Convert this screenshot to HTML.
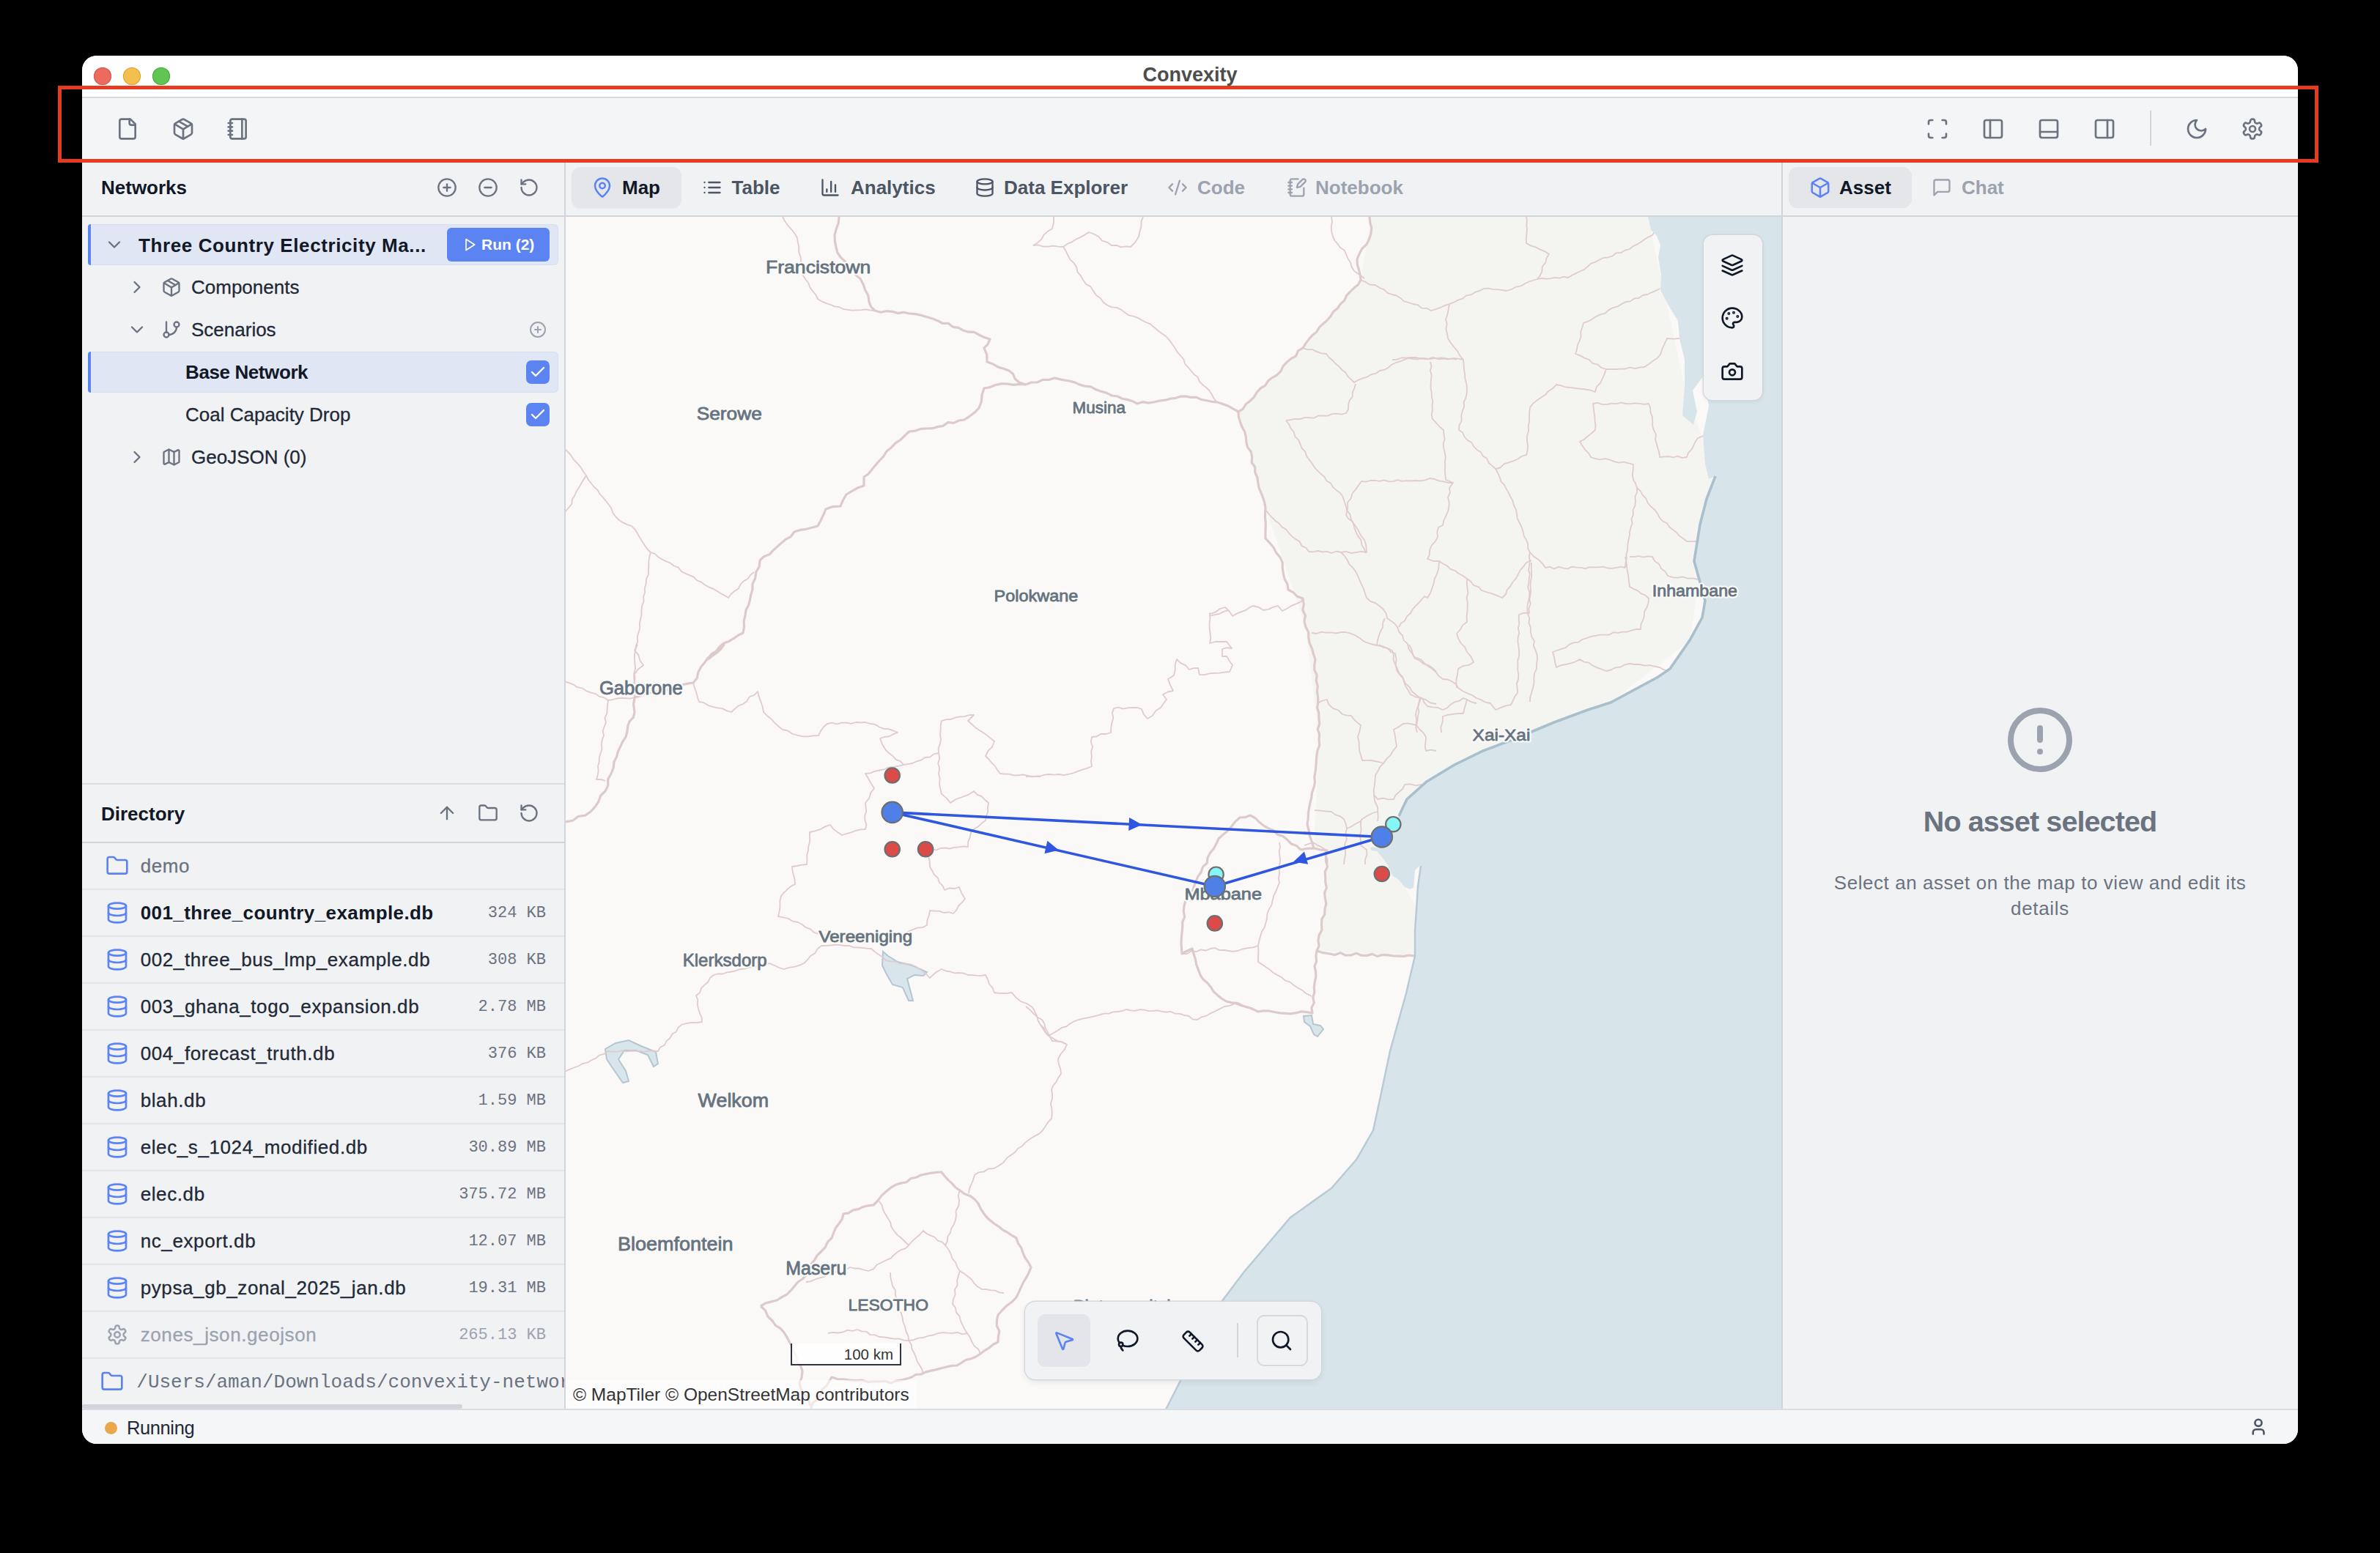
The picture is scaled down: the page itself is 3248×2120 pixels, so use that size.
<!DOCTYPE html>
<html><head><meta charset="utf-8"><title>Convexity</title>
<style>
html,body{margin:0;padding:0;background:#000;width:3248px;height:2120px;overflow:hidden;font-family:"Liberation Sans",sans-serif;}
.a{position:absolute}
#win{position:absolute;left:112px;top:76px;width:3024px;height:1895px;border-radius:20px;overflow:hidden;background:#f1f2f4;}
.ic{position:absolute;fill:none;stroke:currentColor;stroke-linecap:round;stroke-linejoin:round;overflow:visible;}
.t{position:absolute;white-space:nowrap;line-height:1;}
@media (max-width:2400px){html{zoom:0.5;}}
#redbox{position:absolute;left:79px;top:117px;width:3085px;height:105px;box-sizing:border-box;border:5px solid #e63b1f;}
</style></head><body>
<div id="win">
<div class="a" style="left:0.0px;top:0.0px;width:3024.0px;height:56.0px;background:#fff;"></div>
<div class="a" style="left:0.0px;top:56.0px;width:3024.0px;height:2.0px;background:#d5d7dc;"></div>
<div class="a" style="left:16.0px;top:16.0px;width:24.0px;height:24.0px;border-radius:50%;background:#ed6a5e;box-shadow:inset 0 0 0 1px #d5544a;"></div>
<div class="a" style="left:56.0px;top:16.0px;width:24.0px;height:24.0px;border-radius:50%;background:#f5bf4f;box-shadow:inset 0 0 0 1px #d9a23a;"></div>
<div class="a" style="left:96.0px;top:16.0px;width:24.0px;height:24.0px;border-radius:50%;background:#61c554;box-shadow:inset 0 0 0 1px #4aa83e;"></div>
<div class="t" style="left:512.0px;width:2000px;text-align:center;top:13.3px;font-size:27px;color:#4d4d4d;font-weight:bold;font-family:'Liberation Sans',sans-serif;">Convexity</div>
<div class="a" style="left:0.0px;top:58.0px;width:3024.0px;height:88.0px;background:#f4f5f7;"></div>
<div class="a" style="left:0.0px;top:144.0px;width:3024.0px;height:2.0px;background:#d9dce1;"></div>
<svg class="ic" style="left:46.0px;top:84.0px;width:32px;height:32px;color:#6b7280;" viewBox="0 0 24 24" stroke-width="2"><path d="M15 2H6a2 2 0 0 0-2 2v16a2 2 0 0 0 2 2h12a2 2 0 0 0 2-2V7Z"/><path d="M14 2v4a2 2 0 0 0 2 2h4"/></svg>
<svg class="ic" style="left:122.0px;top:84.0px;width:32px;height:32px;color:#6b7280;" viewBox="0 0 24 24" stroke-width="2"><path d="M11 21.73a2 2 0 0 0 2 0l7-4A2 2 0 0 0 21 16V8a2 2 0 0 0-1-1.73l-7-4a2 2 0 0 0-2 0l-7 4A2 2 0 0 0 3 8v8a2 2 0 0 0 1 1.73z"/><path d="M12 22V12"/><path d="m3.3 7 7.703 4.734a2 2 0 0 0 1.994 0L20.7 7"/><path d="m7.5 4.27 9 5.15"/></svg>
<svg class="ic" style="left:196.5px;top:84.0px;width:32px;height:32px;color:#6b7280;" viewBox="0 0 24 24" stroke-width="2"><path d="M2 6h4"/><path d="M2 10h4"/><path d="M2 14h4"/><path d="M2 18h4"/><rect width="16" height="20" x="4" y="2" rx="2"/><path d="M16 2v20"/></svg>
<svg class="ic" style="left:2516.0px;top:84.0px;width:32px;height:32px;color:#6b7280;" viewBox="0 0 24 24" stroke-width="2"><path d="M3 7V5a2 2 0 0 1 2-2h2"/><path d="M17 3h2a2 2 0 0 1 2 2v2"/><path d="M21 17v2a2 2 0 0 1-2 2h-2"/><path d="M7 21H5a2 2 0 0 1-2-2v-2"/></svg>
<svg class="ic" style="left:2592.0px;top:84.0px;width:32px;height:32px;color:#6b7280;" viewBox="0 0 24 24" stroke-width="2"><rect width="18" height="18" x="3" y="3" rx="2"/><path d="M9 3v18"/></svg>
<svg class="ic" style="left:2668.0px;top:84.0px;width:32px;height:32px;color:#6b7280;" viewBox="0 0 24 24" stroke-width="2"><rect width="18" height="18" x="3" y="3" rx="2"/><path d="M3 15h18"/></svg>
<svg class="ic" style="left:2744.0px;top:84.0px;width:32px;height:32px;color:#6b7280;" viewBox="0 0 24 24" stroke-width="2"><rect width="18" height="18" x="3" y="3" rx="2"/><path d="M15 3v18"/></svg>
<div class="a" style="left:2822.0px;top:75.0px;width:2.0px;height:48.0px;background:#d1d5db;"></div>
<svg class="ic" style="left:2869.5px;top:84.0px;width:32px;height:32px;color:#6b7280;" viewBox="0 0 24 24" stroke-width="2"><path d="M12 3a6 6 0 0 0 9 9 9 9 0 1 1-9-9Z"/></svg>
<svg class="ic" style="left:2946.0px;top:84.0px;width:32px;height:32px;color:#6b7280;" viewBox="0 0 24 24" stroke-width="2"><path d="M12.22 2h-.44a2 2 0 0 0-2 2v.18a2 2 0 0 1-1 1.73l-.43.25a2 2 0 0 1-2 0l-.15-.08a2 2 0 0 0-2.73.73l-.22.38a2 2 0 0 0 .73 2.73l.15.1a2 2 0 0 1 1 1.72v.51a2 2 0 0 1-1 1.74l-.15.09a2 2 0 0 0-.73 2.73l.22.38a2 2 0 0 0 2.73.73l.15-.08a2 2 0 0 1 2 0l.43.25a2 2 0 0 1 1 1.73V20a2 2 0 0 0 2 2h.44a2 2 0 0 0 2-2v-.18a2 2 0 0 1 1-1.73l.43-.25a2 2 0 0 1 2 0l.15.08a2 2 0 0 0 2.73-.73l.22-.39a2 2 0 0 0-.73-2.73l-.15-.08a2 2 0 0 1-1-1.74v-.5a2 2 0 0 1 1-1.74l.15-.09a2 2 0 0 0 .73-2.73l-.22-.38a2 2 0 0 0-2.73-.73l-.15.08a2 2 0 0 1-2 0l-.43-.25a2 2 0 0 1-1-1.73V4a2 2 0 0 0-2-2z"/><circle cx="12" cy="12" r="3"/></svg>
<div class="a" style="left:0.0px;top:146.0px;width:658.0px;height:1702.0px;background:#f1f2f4;"></div>
<div class="a" style="left:660.0px;top:146.0px;width:1659.0px;height:72.0px;background:#f1f2f4;"></div>
<div class="a" style="left:2321.0px;top:146.0px;width:703.0px;height:1702.0px;background:#f1f2f4;"></div>
<svg class="a" style="left:660px;top:220px;" width="1659" height="1628" viewBox="772 296 1659 1628">
<rect x="772" y="296" width="1659" height="1628" fill="#faf9f8"/>
<polygon points="1690,562 1778,475 1857,382 1871,296 2249,296 2299,528 2341,650 2306,874 2198,959 2024,1025 1920,1091 1883,1152 1940,1250 1935,1305 1797,1298 1808,1241 1811,1161 1793,1158 1800,1010 1782,856 1727,693" fill="#f3f4ef" opacity="0.8"/>
<polygon points="1205.0,1299.0 1212.0,1305.0 1225.0,1313.0 1245.0,1318.0 1265.0,1327.0 1260.0,1332.0 1248.0,1331.0 1238.0,1336.0 1246.0,1366.0 1240.0,1366.0 1232.0,1348.0 1218.0,1344.0 1210.0,1330.0 1204.0,1318.0" fill="#d8e5ea" stroke="#b3c7d1" stroke-width="2"/>
<polygon points="826.0,1432.0 840.0,1424.0 858.0,1420.0 875.0,1428.0 895.0,1436.0 898.0,1452.0 892.0,1456.0 884.0,1440.0 868.0,1434.0 852.0,1434.0 844.0,1446.0 854.0,1462.0 858.0,1476.0 850.0,1478.0 836.0,1458.0 828.0,1446.0" fill="#d8e5ea" stroke="#b3c7d1" stroke-width="2"/>
<polygon points="1779.0,1387.0 1790.0,1386.0 1792.0,1398.0 1802.0,1400.0 1806.0,1405.0 1798.0,1415.0 1793.0,1412.0 1788.0,1401.0 1780.0,1395.0" fill="#d8e5ea" stroke="#b3c7d1" stroke-width="2"/>
<polyline points="1068.0,296.0 1071.2,302.3 1075.4,308.0 1080.2,313.3 1084.6,318.8 1088.0,325.0 1089.0,331.4 1090.3,337.7 1090.2,344.2 1092.5,350.4 1093.1,356.9 1093.8,363.3 1093.9,369.8 1096.0,376.0 1099.3,381.3 1103.2,386.3 1105.4,392.4 1109.1,397.5 1113.3,402.3 1116.0,408.0 1121.4,411.4 1127.2,413.9 1133.2,415.8 1138.9,418.4 1145.4,419.2 1151.0,422.0 1157.1,422.9 1163.2,423.7 1169.4,423.4 1175.6,423.1 1181.8,422.3 1187.9,423.5 1194.0,424.0" fill="none" stroke="#e0cbcd" stroke-width="1.8" stroke-linejoin="round"/>
<polyline points="1410.0,335.0 1416.9,334.3 1423.6,336.6 1430.5,336.7 1437.4,335.6 1444.2,336.7 1451.0,337.0 1454.5,342.6 1457.4,348.5 1460.4,354.3 1465.5,358.9 1469.0,364.4 1470.4,371.2 1474.8,376.3 1478.0,382.0 1482.1,387.7 1488.4,391.4 1492.1,397.4 1496.2,403.1 1501.9,407.3 1506.0,413.0 1511.3,416.8 1517.1,419.4 1524.0,419.9 1529.8,422.6 1535.0,426.6 1540.3,430.3 1546.7,431.6 1552.7,433.9 1558.3,437.1 1564.0,440.0 1570.2,442.7 1575.2,447.0 1580.3,451.3 1585.6,455.2 1591.0,459.0 1595.5,463.9 1599.4,469.3 1603.3,474.7 1606.6,480.4 1610.9,485.5 1615.3,490.5 1617.4,497.2 1622.0,502.0 1625.9,506.6 1629.7,511.3 1634.7,514.9 1637.0,520.9 1641.2,525.2 1646.0,529.0 1650.6,533.4 1653.9,538.7 1656.8,544.4 1661.0,549.0" fill="none" stroke="#e0cbcd" stroke-width="1.8" stroke-linejoin="round"/>
<polyline points="1410.0,335.0 1416.0,331.4 1421.2,326.7 1424.8,320.3 1430.0,315.7 1436.0,312.0 1437.9,304.1 1438.0,296.0" fill="none" stroke="#e0cbcd" stroke-width="1.8" stroke-linejoin="round"/>
<polyline points="1451.0,337.0 1456.5,333.0 1462.7,330.4 1468.3,326.7 1474.5,323.9 1480.3,320.6 1486.0,317.0 1492.8,319.5 1499.1,323.0 1504.1,328.6 1511.1,330.8 1517.0,335.0 1523.6,334.8 1529.9,337.4 1536.5,336.4 1543.0,337.0 1549.2,330.6 1554.0,323.0 1555.4,316.2 1557.4,309.6 1557.5,302.5 1560.0,296.0" fill="none" stroke="#e0cbcd" stroke-width="1.8" stroke-linejoin="round"/>
<polyline points="770.0,612.0 774.9,616.8 779.4,621.9 783.1,627.7 787.9,632.5 792.4,637.7 795.9,643.5 800.0,649.0 802.8,654.8 806.8,659.7 810.7,664.7 815.6,668.9 818.7,674.5 823.0,679.1 827.0,684.0 830.9,689.0 834.4,694.3 836.5,700.5 840.5,705.5 845.0,710.0 850.3,713.4 856.0,716.1 862.0,718.0 866.4,722.6 869.9,728.0 872.9,733.6 876.3,739.0 879.8,744.3 883.4,749.5 888.0,754.0 893.9,756.1 898.5,760.5 903.7,763.7 909.2,766.4 915.0,768.7 919.8,772.5 925.7,774.7 929.8,779.9 935.2,782.8 940.9,785.1 946.6,787.6 951.0,792.2 956.8,794.5 961.7,798.3 967.0,801.3 972.8,803.6 978.2,806.5 983.3,810.0 988.8,812.7 994.0,816.0 997.7,811.0 1002.4,806.9 1007.7,803.5 1010.6,797.6 1015.0,793.2 1020.5,790.0 1024.2,784.9 1029.0,781.0" fill="none" stroke="#e0cbcd" stroke-width="1.8" stroke-linejoin="round"/>
<polyline points="800.0,649.0 796.7,654.3 793.4,659.7 790.3,665.1 786.9,670.4 784.4,676.2 781.0,681.4 780.2,688.1 776.1,693.0 771.9,697.9 770.0,704.0" fill="none" stroke="#e0cbcd" stroke-width="1.8" stroke-linejoin="round"/>
<polyline points="888.0,754.0 886.3,760.0 885.3,766.0 885.3,772.3 885.0,778.4 884.8,784.6 882.0,790.4 881.7,796.6 879.9,802.6 880.1,808.8 878.1,814.7 878.5,821.0 876.2,826.9 875.4,833.0 875.4,839.2 874.1,845.2 872.8,851.3 873.3,857.5 871.4,863.5 869.7,869.5 870.3,875.8 867.9,881.6 867.3,887.8 866.0,893.8 866.0,900.0 866.5,906.5 867.1,913.0 865.2,919.5 865.1,926.0 866.2,932.5 867.1,939.0 866.8,945.5 866.0,952.0" fill="none" stroke="#e0cbcd" stroke-width="1.8" stroke-linejoin="round"/>
<polyline points="770.0,930.0 776.2,932.1 782.4,934.3 787.8,938.2 794.5,939.3 800.0,943.1 806.1,945.3 812.5,947.1 818.0,950.8 824.5,952.2 830.0,956.0 836.0,955.1 841.9,953.5 847.9,952.9 854.0,953.1 860.1,953.6 866.0,952.0" fill="none" stroke="#e0cbcd" stroke-width="1.8" stroke-linejoin="round"/>
<polyline points="866.0,952.0 865.2,945.6 867.3,939.2 865.0,932.8 866.6,926.4 866.0,920.0 871.2,913.2 878.0,908.0 873.4,901.7 871.2,893.9 866.0,888.0 870.0,880.0" fill="none" stroke="#e0cbcd" stroke-width="1.8" stroke-linejoin="round"/>
<polyline points="830.0,956.0 829.2,962.0 828.6,968.1 828.3,974.1 825.4,979.8 826.9,986.2 824.7,992.0 822.7,997.8 824.0,1004.2 821.8,1010.0 820.8,1016.0 821.5,1022.2 819.7,1028.0 817.9,1033.9 817.7,1040.0 816.0,1045.9 816.7,1052.1 815.6,1058.1 814.0,1064.0 820.2,1063.9 826.0,1066.0" fill="none" stroke="#e0cbcd" stroke-width="1.8" stroke-linejoin="round"/>
<polyline points="946.0,932.0 947.8,938.6 950.2,944.9 951.8,951.6 954.0,958.0 960.5,959.2 966.3,962.8 972.6,964.9 979.0,966.4 985.7,967.1 991.7,970.1 998.0,972.0 1002.8,967.6 1007.9,963.4 1014.2,961.0 1019.4,957.1 1022.9,951.0 1029.5,948.8 1034.0,944.0 1035.7,951.1 1038.3,957.9 1040.6,964.8 1042.0,972.0 1046.9,977.2 1052.5,981.5 1057.2,986.8 1062.5,991.5 1068.0,996.0 1075.4,997.7 1081.7,1002.0 1089.0,1004.0 1096.0,1005.4 1103.0,1005.3 1110.0,1004.3 1117.0,1004.0 1120.0,997.9 1123.9,992.5 1129.0,988.0 1135.5,986.7 1142.0,988.7 1148.5,986.7 1155.0,986.6 1161.5,987.9 1168.0,986.0 1174.5,986.4 1181.0,986.0 1187.3,987.8 1193.9,988.8 1199.8,992.2 1205.9,994.9 1212.7,995.1 1218.9,997.3 1225.0,1000.0 1219.1,1002.2 1213.4,1005.2 1207.0,1006.0 1201.0,1008.0 1204.2,1016.4 1209.0,1024.0 1213.5,1028.3 1218.5,1032.1 1222.8,1036.8 1228.8,1039.2 1233.0,1044.0 1239.0,1043.2 1245.0,1042.0 1250.9,1039.3 1257.1,1037.6 1262.6,1034.0 1269.3,1033.4 1274.6,1029.3 1281.0,1028.0 1280.6,1021.6 1283.0,1015.5 1284.0,1009.3 1283.1,1002.8 1283.6,996.5 1283.7,990.2 1285.0,984.0 1291.2,982.2 1297.6,982.0 1303.7,979.7 1310.0,978.4 1316.4,978.2 1322.5,976.2 1329.0,976.0 1321.0,984.0 1325.9,988.3 1330.7,992.7 1336.0,996.6 1341.6,1000.0 1347.0,1003.7 1352.0,1007.9 1357.0,1012.0 1354.2,1019.4 1348.5,1025.0 1345.0,1032.0 1349.4,1036.5 1353.4,1041.3 1357.9,1045.6 1361.1,1051.1 1365.0,1056.0 1371.1,1056.7 1377.2,1056.6 1383.3,1058.4 1389.4,1058.3 1395.6,1057.5 1401.7,1058.7 1407.7,1060.3 1413.9,1059.6 1420.0,1060.0" fill="none" stroke="#e0cbcd" stroke-width="1.8" stroke-linejoin="round"/>
<polyline points="1233.0,1044.0 1226.5,1045.6 1220.0,1046.8 1213.2,1047.3 1207.0,1050.1 1200.5,1051.5 1193.9,1052.8 1187.7,1055.4 1181.0,1056.0 1185.0,1062.7 1188.7,1069.5 1193.0,1076.0 1188.3,1082.2 1186.0,1089.9 1181.0,1096.0 1181.6,1102.0 1182.1,1108.0 1180.1,1114.0 1180.5,1120.0 1182.3,1126.0 1181.0,1132.0 1174.3,1132.3 1167.9,1133.9 1161.7,1136.4 1155.3,1138.1 1149.0,1140.0 1143.0,1136.1 1137.4,1131.7 1133.0,1126.0 1126.0,1128.4 1119.4,1132.2 1112.3,1134.3 1105.0,1136.0 1105.1,1142.4 1105.2,1148.7 1103.4,1154.9 1102.9,1161.2 1101.2,1167.3 1101.5,1173.7 1101.0,1180.0 1094.3,1180.6 1087.7,1182.0 1081.0,1183.0 1081.6,1189.1 1083.1,1195.0 1084.6,1200.9 1085.0,1207.0 1079.4,1209.9 1074.6,1213.9 1070.1,1218.3 1066.0,1223.0 1064.4,1229.9 1064.5,1237.1 1063.7,1244.1 1062.0,1251.0 1068.9,1252.4 1075.8,1253.8 1082.0,1257.7 1089.0,1259.0 1094.7,1262.0 1099.7,1266.2 1106.0,1268.3 1110.8,1272.9 1117.0,1275.0 1123.4,1276.5 1130.1,1274.6 1136.6,1275.7 1142.9,1278.1 1149.5,1277.4 1155.9,1279.3 1162.5,1278.2 1169.0,1279.0 1175.3,1277.4 1181.8,1278.6 1188.2,1278.6 1194.6,1276.8 1200.9,1275.8 1207.4,1276.1 1213.9,1277.5 1220.2,1276.5 1226.5,1274.3 1233.0,1275.0 1239.2,1271.9 1245.4,1269.2 1251.8,1266.6 1258.9,1266.2 1265.0,1263.0 1265.4,1256.2 1267.8,1249.7 1269.0,1243.0 1275.4,1243.7 1281.9,1243.7 1288.1,1246.0 1294.7,1245.2 1301.0,1247.0 1305.3,1242.3 1308.2,1236.3 1312.8,1231.9 1317.0,1227.0 1312.3,1219.4 1309.0,1211.0 1302.5,1213.0 1295.4,1212.4 1289.0,1215.0 1286.4,1209.2 1281.9,1204.6 1279.9,1198.4 1275.0,1194.1 1272.1,1188.5 1269.0,1183.0 1268.6,1175.2 1266.7,1167.6 1265.0,1160.0 1271.1,1158.4 1277.5,1160.5 1283.6,1157.9 1289.8,1157.5 1296.2,1158.5 1302.3,1156.9 1308.5,1156.3 1314.7,1155.3 1321.0,1156.0 1321.2,1149.1 1323.9,1142.7 1325.0,1136.0 1329.6,1131.4 1335.2,1128.2 1339.8,1123.7 1345.0,1120.0 1345.9,1114.0 1348.3,1108.2 1348.0,1102.0 1349.0,1096.0 1344.1,1091.8 1339.6,1087.2 1333.4,1084.7 1329.0,1080.0 1321.4,1084.9 1313.0,1088.0 1304.5,1091.0 1297.0,1096.0 1291.6,1089.4 1285.0,1084.0 1283.3,1077.1 1282.1,1070.1 1282.7,1062.9 1281.0,1056.0 1282.2,1049.0 1280.2,1042.0 1282.3,1035.0 1281.0,1028.0" fill="none" stroke="#e0cbcd" stroke-width="1.8" stroke-linejoin="round"/>
<polyline points="1400.0,1060.0 1406.4,1059.6 1412.9,1059.8 1419.4,1059.5 1425.7,1057.7 1432.2,1057.0 1438.6,1057.6 1445.1,1057.0 1451.6,1058.2 1458.0,1057.0 1464.6,1055.3 1470.9,1052.9 1477.3,1050.6 1483.7,1048.6 1490.0,1046.0 1489.0,1039.3 1489.8,1032.7 1489.1,1026.0 1491.1,1019.3 1488.8,1012.7 1490.0,1006.0 1496.7,1005.4 1502.7,1001.8 1509.6,1002.0 1516.0,1000.0 1516.3,993.3 1517.3,986.8 1519.4,980.3 1517.9,973.4 1520.0,967.0 1526.2,965.5 1532.5,967.7 1538.8,966.3 1545.0,966.0 1551.7,965.9 1558.0,968.0 1560.8,975.2 1566.0,981.0 1572.8,977.0 1577.3,970.2 1584.0,966.0 1587.8,960.4 1592.0,955.0 1587.0,948.0 1593.7,944.5 1601.0,943.0 1597.0,935.2 1594.0,927.0 1602.0,922.0 1603.7,914.7 1603.7,907.2 1606.0,900.0 1611.3,905.1 1618.1,908.4 1623.0,914.0 1628.8,912.1 1635.0,912.0 1637.0,921.0 1643.9,921.2 1650.6,919.4 1657.5,918.8 1664.4,918.6 1671.2,917.6 1678.0,917.0 1682.0,908.0 1677.7,902.2 1674.0,896.0 1668.0,896.0 1668.0,886.0 1674.4,884.2 1681.0,885.0 1674.0,876.0 1666.3,876.0 1658.6,876.0 1651.0,878.0 1652.3,871.2 1651.5,864.3 1650.6,857.5 1650.6,850.7 1651.5,843.8 1651.0,837.0 1652.0,838.0 1658.9,835.4 1664.9,831.0 1672.0,829.0 1677.6,834.5 1682.0,841.0 1687.4,837.9 1693.2,835.4 1699.2,833.4 1704.4,829.8 1710.0,827.0 1717.5,828.8 1724.0,833.0 1730.9,831.9 1737.3,828.8 1744.0,827.0 1750.0,834.0 1756.5,830.8 1762.7,826.8 1769.4,824.1 1776.0,821.0 1778.0,817.0" fill="none" stroke="#e0cbcd" stroke-width="1.8" stroke-linejoin="round"/>
<polyline points="1420.0,1399.0 1416.6,1393.3 1415.0,1386.8 1412.2,1380.8 1409.0,1375.0 1401.4,1370.1 1393.0,1367.0 1386.4,1361.6 1381.0,1355.0 1375.0,1355.8 1369.0,1356.0 1363.0,1355.8 1357.0,1355.0 1354.6,1348.7 1350.1,1343.5 1348.1,1337.0 1345.0,1331.0 1339.0,1331.8 1333.0,1331.6 1327.0,1331.2 1321.0,1331.0 1315.2,1328.7 1309.1,1328.0 1302.7,1328.3 1296.9,1326.3 1290.8,1325.3 1285.0,1323.0 1279.0,1326.2 1273.8,1330.3 1269.0,1335.0 1264.5,1330.3 1259.6,1326.3 1254.4,1322.5 1249.0,1319.0 1242.6,1316.4 1235.8,1315.5 1228.9,1315.7 1222.5,1312.7 1215.7,1312.4 1209.0,1311.0 1204.4,1306.4 1199.1,1302.9 1193.9,1299.2 1189.0,1295.0 1183.0,1294.7 1177.0,1293.9 1170.9,1293.5 1164.9,1293.4 1159.1,1290.8 1153.0,1291.0 1146.6,1290.2 1140.2,1289.6 1133.8,1290.5 1127.4,1290.8 1121.0,1291.0 1115.7,1295.3 1112.1,1301.3 1106.2,1305.0 1101.9,1310.3 1097.0,1315.0 1090.5,1317.9 1083.7,1319.8 1076.7,1320.9 1070.0,1323.0 1063.1,1321.0 1056.6,1317.8 1050.0,1315.0 1043.3,1316.0 1036.7,1318.0 1030.2,1320.0 1023.3,1320.4 1016.8,1322.4 1010.0,1323.0 1004.2,1325.1 998.2,1326.5 992.1,1327.4 986.3,1329.5 979.9,1329.3 974.0,1331.0 969.0,1334.8 966.2,1340.5 961.5,1344.6 957.1,1348.9 955.0,1355.2 950.0,1359.0 952.3,1364.8 951.8,1371.2 953.1,1377.2 955.0,1383.1 957.6,1388.8 958.0,1395.0 951.0,1396.2 943.9,1396.0 936.8,1396.9 930.0,1399.0 925.4,1402.9 922.6,1408.6 917.3,1411.8 914.3,1417.2 909.5,1421.1 906.8,1426.7 901.0,1429.6 898.0,1435.0 891.8,1434.7 885.6,1434.4 879.5,1435.8 873.3,1434.7 867.1,1434.8 860.9,1434.7 854.7,1435.4 848.5,1434.4 842.4,1435.4 836.2,1435.6 830.0,1435.0 824.7,1438.7 818.3,1440.3 813.3,1444.5 807.5,1447.1 802.0,1450.4 795.5,1451.8 790.0,1455.0 783.3,1457.5 776.6,1460.2 770.0,1463.0" fill="none" stroke="#e0cbcd" stroke-width="1.8" stroke-linejoin="round"/>
<polyline points="1420.0,1399.0 1424.6,1403.3 1426.9,1409.3 1431.0,1414.0 1437.1,1417.4 1443.0,1421.1 1450.0,1422.4 1456.0,1426.0 1452.6,1433.0 1447.4,1439.0 1444.0,1446.0 1444.9,1452.8 1447.2,1459.2 1448.0,1466.0 1444.3,1471.0 1441.7,1476.7 1437.6,1481.3 1435.0,1487.0 1436.1,1493.7 1435.8,1500.3 1433.9,1507.0 1435.4,1513.7 1435.7,1520.3 1435.0,1527.0 1430.3,1531.8 1426.7,1537.4 1423.0,1543.0 1417.6,1548.1 1410.9,1551.4 1404.7,1555.4 1399.0,1560.0 1394.8,1564.7 1389.1,1567.7 1385.3,1572.8 1380.1,1576.4 1375.0,1580.0 1369.3,1586.9 1362.0,1592.0 1355.9,1595.2 1348.7,1595.5 1342.9,1599.5 1335.9,1600.3 1330.0,1604.0 1328.2,1610.3 1325.7,1616.4 1323.0,1622.4 1322.0,1629.0" fill="none" stroke="#e0cbcd" stroke-width="1.8" stroke-linejoin="round"/>
<polyline points="1613.0,1302.0 1619.7,1302.1 1625.8,1298.3 1632.6,1299.2 1638.8,1296.4 1645.7,1297.5 1652.0,1295.0 1658.3,1294.2 1664.2,1297.1 1670.5,1297.0 1676.6,1298.0 1682.7,1298.9 1689.0,1298.0 1695.8,1295.5 1702.9,1294.1 1710.1,1293.3 1717.0,1291.0 1718.3,1284.6 1720.1,1278.3 1721.9,1272.0 1725.5,1266.3 1727.4,1260.1 1729.0,1253.7 1729.4,1247.0 1732.0,1241.0 1735.4,1235.4 1736.7,1229.0 1738.3,1222.7 1741.2,1217.0 1743.5,1210.9 1746.0,1205.0 1744.8,1198.9 1746.2,1192.8 1745.6,1186.7 1746.2,1180.6 1747.2,1174.4 1746.4,1168.3 1745.7,1162.2 1747.0,1156.1 1746.0,1150.0" fill="none" stroke="#e0cbcd" stroke-width="1.8" stroke-linejoin="round"/>
<polyline points="1717.0,1291.0 1717.4,1298.3 1717.1,1305.7 1717.0,1313.0 1722.3,1316.4 1727.5,1320.1 1732.7,1323.6 1737.5,1327.8 1743.0,1331.0 1748.9,1334.0 1753.9,1338.5 1760.5,1340.6 1765.6,1344.8 1771.1,1348.5 1777.0,1351.6 1782.0,1356.0 1790.0,1360.0" fill="none" stroke="#e0cbcd" stroke-width="1.8" stroke-linejoin="round"/>
<polyline points="1400.0,1374.0 1405.5,1378.5 1410.5,1383.7 1415.7,1388.5 1422.0,1392.0 1425.3,1397.5 1426.9,1403.9 1429.9,1409.6 1432.8,1415.4 1436.0,1421.0 1442.2,1421.3 1448.3,1422.4 1454.0,1425.0" fill="none" stroke="#e0cbcd" stroke-width="1.8" stroke-linejoin="round"/>
<polyline points="1443.0,1407.0 1448.4,1403.2 1454.8,1401.4 1460.2,1397.6 1465.8,1394.2 1472.0,1392.0 1477.9,1390.7 1483.8,1389.4 1489.7,1388.1 1495.6,1386.8 1501.4,1385.0 1507.3,1383.7 1513.5,1383.6 1519.2,1381.3 1525.3,1381.0 1531.3,1380.1 1537.0,1378.0 1543.0,1379.3 1549.1,1379.8 1555.3,1378.2 1561.4,1378.5 1567.5,1380.2 1573.6,1380.0 1579.7,1379.3 1585.8,1380.9 1591.8,1381.7 1598.0,1381.0 1603.7,1383.7 1610.2,1383.9 1616.2,1386.0 1622.4,1387.0 1627.6,1391.4 1634.0,1392.0 1639.8,1388.3 1646.6,1386.6 1652.5,1383.1 1658.8,1380.2 1664.9,1377.1 1671.0,1374.0 1678.3,1372.9 1685.0,1370.0 1691.3,1372.5 1698.0,1373.9 1704.6,1375.6 1710.6,1378.7 1717.0,1381.0" fill="none" stroke="#e0cbcd" stroke-width="1.8" stroke-linejoin="round"/>
<polyline points="1420.0,1399.0 1423.3,1404.3 1426.7,1409.5 1431.0,1414.0 1437.0,1410.5 1443.0,1407.0" fill="none" stroke="#e0cbcd" stroke-width="1.8" stroke-linejoin="round"/>
<polyline points="1100.0,1750.0 1106.4,1749.1 1112.2,1746.5 1118.2,1744.7 1124.4,1743.1 1130.0,1740.0 1135.8,1737.4 1142.1,1736.4 1148.4,1735.1 1154.3,1733.0 1160.0,1730.0 1166.2,1731.5 1172.7,1731.6 1178.8,1733.5 1185.0,1735.0 1192.0,1732.4 1196.9,1726.5 1203.5,1723.3 1210.0,1720.0 1215.7,1717.7 1219.9,1713.2 1224.5,1709.3 1229.7,1706.2 1235.6,1704.3 1240.0,1700.0 1244.7,1694.7 1249.9,1689.9 1255.3,1685.3 1260.0,1680.0 1264.5,1684.0 1270.0,1686.6 1275.7,1689.0 1279.9,1693.5 1285.7,1695.6 1290.0,1700.0 1294.3,1705.3 1297.4,1711.2 1299.5,1717.8 1303.9,1723.0 1306.2,1729.4 1310.0,1735.0 1315.6,1738.4 1320.7,1742.5 1325.9,1746.5 1329.6,1752.1 1334.4,1756.6 1340.0,1760.0 1346.1,1760.2 1352.1,1761.3 1358.2,1761.7 1363.9,1764.4 1370.0,1765.0" fill="none" stroke="#e0cbcd" stroke-width="1.8" stroke-linejoin="round"/>
<polyline points="1200.0,1640.0 1203.7,1645.3 1205.2,1651.7 1208.2,1657.3 1211.5,1662.8 1215.0,1668.2 1216.4,1674.7 1220.0,1680.0 1224.4,1685.6 1230.0,1690.0 1235.0,1695.0 1240.0,1700.0" fill="none" stroke="#e0cbcd" stroke-width="1.8" stroke-linejoin="round"/>
<polyline points="1310.0,1625.0 1307.7,1631.8 1309.0,1639.1 1308.3,1646.2 1304.6,1652.8 1305.0,1660.0 1303.7,1666.0 1301.7,1671.8 1298.2,1677.0 1296.8,1683.0 1293.3,1688.2 1292.8,1694.5 1290.0,1700.0" fill="none" stroke="#e0cbcd" stroke-width="1.8" stroke-linejoin="round"/>
<polyline points="1215.0,1737.0 1215.3,1743.4 1216.6,1749.6 1218.2,1755.7 1221.9,1761.3 1221.9,1767.8 1223.8,1773.8 1225.0,1780.0 1226.8,1786.3 1229.7,1792.2 1231.5,1798.5 1232.6,1805.0 1235.1,1811.0 1236.4,1817.5 1239.4,1823.4 1240.0,1830.0 1243.6,1835.3 1244.5,1841.7 1247.7,1847.2 1250.0,1853.0 1251.9,1859.0 1255.4,1864.3 1258.6,1869.8 1260.0,1876.0" fill="none" stroke="#e0cbcd" stroke-width="1.8" stroke-linejoin="round"/>
<polyline points="1310.0,1735.0 1308.0,1741.3 1306.2,1747.7 1306.6,1754.5 1302.9,1760.4 1303.7,1767.3 1301.0,1773.5 1300.0,1780.0 1303.9,1785.2 1305.1,1791.8 1309.4,1796.7 1310.9,1803.1 1313.7,1808.9 1316.5,1814.6 1320.0,1820.0 1323.7,1825.5 1326.3,1831.8 1329.7,1837.5 1335.3,1841.8 1338.0,1848.0" fill="none" stroke="#e0cbcd" stroke-width="1.8" stroke-linejoin="round"/>
<polyline points="1130.0,1820.0 1136.6,1818.8 1143.5,1819.5 1150.1,1818.5 1156.6,1815.9 1163.5,1816.9 1170.0,1815.0 1175.9,1817.4 1182.4,1817.8 1187.6,1822.2 1194.2,1822.4 1200.0,1825.0 1206.7,1825.3 1213.4,1826.5 1220.0,1827.7 1226.8,1827.3 1233.3,1829.7 1240.0,1830.0 1246.9,1829.2 1253.3,1826.7 1260.2,1825.8 1266.8,1823.7 1273.6,1822.5 1280.0,1820.0 1286.7,1819.1 1293.3,1819.6 1300.0,1819.9 1306.7,1818.9 1313.3,1821.3 1320.0,1820.0" fill="none" stroke="#e0cbcd" stroke-width="1.8" stroke-linejoin="round"/>
<polyline points="1858.0,657.0 1864.2,657.6 1870.3,656.0 1876.5,655.9 1882.7,656.9 1888.8,655.3 1895.0,657.3 1901.2,657.2 1907.3,655.1 1913.5,656.8 1919.7,656.2 1925.8,656.5 1932.0,656.0 1938.5,656.3 1944.9,655.3 1951.0,653.0 1957.4,653.9 1963.6,656.3 1970.1,657.4 1976.4,659.1 1983.0,659.0 1978.0,666.0 1978.9,672.5 1976.0,678.7 1977.6,685.2 1977.4,691.7 1976.0,698.0 1973.4,704.2 1970.4,710.3 1969.0,717.0 1963.0,720.0 1961.2,726.4 1962.0,733.0 1958.7,739.2 1953.9,744.5 1951.0,751.0 1950.8,757.3 1948.0,763.0 1955.8,765.8 1964.0,766.0 1963.0,777.0 1961.0,783.7 1957.9,790.0 1956.5,796.9 1954.2,803.5 1951.8,810.0 1948.0,816.0 1944.0,814.0 1939.9,818.5 1936.1,823.2 1931.7,827.4 1927.7,832.0 1924.7,837.5 1919.9,841.4 1917.4,847.2 1912.1,850.7 1909.0,856.0" fill="none" stroke="#e0cbcd" stroke-width="1.8" stroke-linejoin="round"/>
<polyline points="1858.0,657.0 1853.9,662.6 1849.9,668.3 1845.5,673.7 1843.5,680.7 1839.0,686.0 1839.2,694.6 1837.0,703.0 1840.3,708.3 1845.4,712.0 1849.0,717.0 1853.6,723.5 1856.9,730.8 1862.0,737.0 1864.4,745.3 1865.0,754.0 1858.0,752.9 1851.0,754.0 1844.0,755.2 1837.0,752.8 1830.0,754.0" fill="none" stroke="#e0cbcd" stroke-width="1.8" stroke-linejoin="round"/>
<polyline points="1830.0,754.0 1834.7,758.7 1838.5,764.1 1841.3,770.2 1846.1,774.8 1850.0,780.1 1853.0,786.0 1855.5,792.0 1858.0,797.9 1860.9,803.7 1862.9,809.9 1865.0,816.0 1870.2,820.8 1877.1,823.2 1882.7,827.3 1888.0,832.0 1891.7,837.5 1893.0,844.0 1898.1,847.4 1903.1,851.1 1907.0,856.0 1909.1,862.5 1914.0,867.5 1915.7,874.2 1921.0,878.9 1922.4,885.8 1926.7,891.2 1930.0,897.0 1939.0,900.0 1943.6,904.9 1948.7,909.3 1954.4,913.0 1959.5,917.4 1963.7,922.9 1969.0,927.0 1975.3,927.5 1981.0,930.0 1986.5,933.5 1990.0,939.0 1995.9,943.2 2002.3,946.3 2009.1,948.9 2015.0,953.0 2021.3,955.4 2027.3,958.7 2034.0,960.0 2041.0,969.0 2047.8,966.1 2054.7,963.3 2062.0,962.0 2064.8,956.6 2067.2,950.9 2071.0,946.0 2070.7,939.7 2069.9,933.4 2072.1,927.1 2072.3,920.8 2071.2,914.5 2071.4,908.2 2071.1,901.9 2073.2,895.7 2073.1,889.4 2072.6,883.1 2071.4,876.7 2071.5,870.5 2073.3,864.2 2071.8,857.9 2073.3,851.6 2072.7,845.3 2073.0,839.0 2079.8,836.7 2087.0,837.0 2086.4,830.7 2088.7,824.5 2087.3,818.2 2088.6,811.9 2089.1,805.7 2088.4,799.4 2088.9,793.1 2090.2,786.9 2090.1,780.6 2089.8,774.3 2090.0,768.0" fill="none" stroke="#e0cbcd" stroke-width="1.8" stroke-linejoin="round"/>
<polyline points="1964.0,766.0 1969.4,769.5 1975.1,772.5 1979.8,777.1 1986.0,779.2 1991.1,783.2 1996.8,786.2 2002.0,790.0 2007.1,793.8 2011.2,799.0 2017.7,801.1 2022.0,806.0 2029.1,808.4 2036.3,810.3 2043.1,813.1 2050.0,816.0 2054.8,811.5 2056.9,805.1 2061.2,800.2 2064.5,794.5 2068.9,789.7 2071.9,783.9 2074.9,778.1 2079.2,773.2 2083.0,768.0 2090.0,765.0" fill="none" stroke="#e0cbcd" stroke-width="1.8" stroke-linejoin="round"/>
<polyline points="2002.0,790.0 2001.9,796.6 2002.6,803.1 2003.3,809.7 2001.6,816.2 2002.8,822.8 2002.7,829.3 2002.3,835.9 2001.6,842.4 2002.0,849.0 1996.3,853.4 1992.7,859.7 1988.0,865.0 1990.3,871.9 1993.8,878.2 1999.1,883.4 2002.0,890.0 2007.5,896.4 2011.0,904.0 2004.4,907.9 1996.6,909.1 1990.0,913.0 1989.2,919.5 1987.8,925.9 1987.2,932.4 1988.0,939.0" fill="none" stroke="#e0cbcd" stroke-width="1.8" stroke-linejoin="round"/>
<polyline points="1830.0,863.0 1836.6,863.0 1842.9,864.6 1849.0,867.0 1855.7,871.3 1862.0,876.0 1870.4,879.0 1879.0,881.0 1879.9,874.5 1881.6,868.4 1883.8,862.3 1887.0,856.5 1887.2,849.9 1890.0,844.0" fill="none" stroke="#e0cbcd" stroke-width="1.8" stroke-linejoin="round"/>
<polyline points="1879.0,881.0 1886.4,882.2 1893.3,884.9 1900.0,888.0 1901.9,894.2 1901.6,900.9 1904.0,907.0 1907.0,912.9 1909.5,919.0 1914.0,924.1 1916.0,930.4 1918.1,936.7 1921.9,942.2 1925.0,948.0 1932.6,951.7 1941.0,953.0 1943.6,959.1 1948.0,964.0 1955.1,965.3 1962.3,966.0 1969.0,969.0 1975.0,966.4 1979.7,961.7 1985.1,958.2 1991.7,956.8 1997.0,953.0 2002.0,955.0 2008.2,958.4 2015.0,960.0" fill="none" stroke="#e0cbcd" stroke-width="1.8" stroke-linejoin="round"/>
<polyline points="1939.0,953.0 1937.1,958.7 1935.1,964.4 1932.9,970.0 1932.0,976.0 1933.1,981.9 1932.6,988.0 1932.4,994.1 1934.0,1000.0" fill="none" stroke="#e0cbcd" stroke-width="1.8" stroke-linejoin="round"/>
<polyline points="2002.0,955.0 2000.3,961.3 1998.4,967.6 1997.0,974.0 1989.9,974.0 1982.8,974.9 1975.8,975.9 1969.0,978.0 1968.7,985.4 1966.4,992.6 1967.0,1000.0" fill="none" stroke="#e0cbcd" stroke-width="1.8" stroke-linejoin="round"/>
<polyline points="2192.0,504.0 2198.5,503.8 2205.0,504.0 2211.5,503.6 2218.1,503.5 2224.5,501.5 2231.1,503.1 2237.5,501.6 2244.0,501.0 2249.9,497.3 2255.4,493.1 2261.2,489.2 2266.0,484.0 2268.4,476.4 2271.7,469.2 2275.0,462.0 2283.5,462.6 2292.0,462.0" fill="none" stroke="#e0cbcd" stroke-width="1.8" stroke-linejoin="round"/>
<polyline points="1817.0,296.0 1818.0,302.7 1816.7,309.6 1817.2,316.3 1819.0,323.0 1821.7,328.5 1825.6,333.1 1829.0,338.0 1834.5,341.4 1837.0,347.0 1839.4,352.9 1843.1,358.2 1844.7,364.5 1848.0,370.0 1855.1,374.8 1862.0,380.0" fill="none" stroke="#e0cbcd" stroke-width="1.8" stroke-linejoin="round"/>
<polyline points="1778.0,475.0 1784.3,477.1 1791.1,477.1 1797.1,480.1 1803.4,482.3 1810.0,483.0 1813.6,488.0 1818.4,491.7 1822.4,496.3 1827.2,500.1 1831.1,504.7 1836.1,508.2 1839.2,513.7 1843.6,517.9 1848.0,522.0 1853.6,518.8 1859.5,516.4 1865.8,514.6 1871.3,511.2 1877.7,509.8 1883.0,506.0 1889.1,504.8 1894.5,502.0 1899.3,497.7 1904.8,495.2 1910.6,493.3 1916.3,491.1 1922.0,489.0 1928.0,489.8 1934.0,490.3 1940.0,489.7 1946.0,490.1 1952.0,490.1 1958.0,488.8 1964.0,490.3 1970.0,489.7 1976.0,490.4 1982.0,489.4 1988.0,491.0" fill="none" stroke="#e0cbcd" stroke-width="1.8" stroke-linejoin="round"/>
<polyline points="1978.0,415.0 1984.0,412.7 1989.7,409.6 1995.9,407.7 2001.0,403.4 2007.6,402.4 2013.1,398.9 2019.2,396.9 2025.0,394.0 2031.3,393.7 2037.4,394.8 2043.7,395.2 2049.8,395.9 2056.0,397.0 2062.6,395.0 2068.8,391.7 2075.7,390.4 2081.7,386.8 2088.0,384.0 2098.0,381.0 2104.0,379.9 2110.0,380.7 2116.0,380.2 2122.0,378.9 2128.0,379.6 2133.9,377.9 2140.0,379.0 2145.1,375.7 2150.6,373.1 2156.0,370.5 2161.6,368.1 2166.4,364.3 2170.8,359.8 2176.7,357.9 2182.0,355.0 2187.8,352.2 2194.2,351.4 2200.4,349.6 2205.6,345.3 2212.3,345.0 2217.8,341.6 2224.0,340.0 2228.7,336.1 2234.3,333.6 2239.4,330.3 2244.4,326.8 2249.5,323.6 2255.0,321.0 2258.2,315.9 2262.1,311.3 2265.0,306.0" fill="none" stroke="#e0cbcd" stroke-width="1.8" stroke-linejoin="round"/>
<polyline points="2083.0,295.0 2083.8,301.2 2083.3,307.3 2083.9,313.5 2083.3,319.7 2082.8,325.8 2083.0,332.0 2089.0,335.4 2095.7,337.4 2101.8,340.6 2108.2,343.2 2114.0,347.0 2110.5,352.3 2109.2,358.6 2105.0,363.5 2104.4,370.2 2101.9,375.9 2098.0,381.0" fill="none" stroke="#e0cbcd" stroke-width="1.8" stroke-linejoin="round"/>
<polyline points="1856.0,382.0 1862.8,384.6 1869.1,388.5 1876.7,389.0 1883.0,393.0 1888.8,395.3 1893.6,399.9 1899.5,402.0 1905.8,403.5 1911.1,406.9 1915.9,411.1 1922.0,413.0 1928.3,415.0 1934.8,416.2 1940.2,420.6 1947.1,420.8 1953.0,424.0 1959.4,422.1 1965.6,419.8 1971.7,417.1 1978.0,415.0" fill="none" stroke="#e0cbcd" stroke-width="1.8" stroke-linejoin="round"/>
<polyline points="1978.0,415.0 1976.7,422.1 1975.4,429.2 1973.0,436.0 1974.7,442.4 1973.3,449.1 1975.0,455.5 1976.0,462.0 1979.8,468.1 1984.3,473.7 1988.9,479.2 1992.3,485.6 1997.0,491.0 1997.6,497.5 1997.9,504.1 1999.1,510.6 1999.4,517.1 2001.3,523.5 2002.0,530.0 2001.7,536.5 2000.5,542.9 1997.7,548.9 1998.0,555.5 1995.5,561.6 1994.3,567.9 1994.7,574.6 1991.4,580.5 1991.0,587.0 1996.1,590.5 1998.6,596.5 2002.8,600.9 2008.2,604.1 2011.4,609.5 2015.5,613.9 2020.9,617.2 2024.0,622.7 2029.3,626.0 2031.8,632.0 2036.4,635.9 2041.0,640.0 2047.6,638.5 2052.5,633.4 2058.8,631.4 2065.1,629.4 2071.1,626.7 2076.6,622.9 2083.0,621.0 2084.6,614.6 2085.0,608.1 2083.9,601.5 2084.0,594.9 2086.0,588.5 2085.7,582.0 2087.0,575.5 2087.0,569.0 2087.2,562.5 2088.0,556.0 2092.3,550.6 2097.6,546.4 2103.4,542.6 2109.0,538.8 2113.6,533.7 2119.3,529.9 2124.0,525.0 2130.5,526.4 2136.8,528.5 2143.4,529.2 2150.0,530.0 2156.8,530.8 2163.7,531.5 2170.5,532.6 2177.0,535.0 2178.8,528.2 2183.9,523.0 2186.9,516.9 2189.6,510.5 2192.0,504.0 2185.5,502.0 2180.2,497.6 2173.5,495.9 2168.5,491.0 2162.2,488.6 2156.3,485.4 2150.0,483.0 2151.9,477.1 2152.9,470.9 2155.7,465.2 2157.5,459.3 2157.2,452.8 2159.3,447.0 2161.0,441.0 2167.1,438.7 2172.8,435.7 2178.2,432.1 2184.0,429.3 2190.5,427.7 2195.4,423.1 2201.1,420.1 2207.5,418.4 2213.0,415.0 2218.5,412.1 2225.0,411.4 2230.2,407.5 2236.6,406.8 2241.8,403.0 2248.1,402.0 2253.7,399.3 2259.5,396.9 2265.0,394.0" fill="none" stroke="#e0cbcd" stroke-width="1.8" stroke-linejoin="round"/>
<polyline points="1900.0,491.0 1906.2,490.8 1912.3,488.5 1918.5,488.6 1924.7,487.8 1931.0,488.0 1937.0,488.9 1943.0,489.0 1949.0,489.9 1955.1,487.9 1961.0,489.1 1967.1,488.3 1973.0,489.1 1979.0,490.2 1985.1,489.1 1991.0,489.9 1997.0,491.0" fill="none" stroke="#e0cbcd" stroke-width="1.8" stroke-linejoin="round"/>
<polyline points="1952.0,494.0 1953.5,500.0 1951.9,506.0 1953.7,512.0 1953.0,518.0 1952.7,524.0 1952.6,530.0 1953.7,536.0 1953.9,542.0 1955.4,547.9 1954.5,554.0 1954.9,560.0 1953.8,566.0 1955.0,572.0 1959.9,577.1 1964.5,582.5 1970.0,587.0 1970.5,593.2 1971.5,599.3 1969.8,605.6 1970.2,611.8 1971.7,617.9 1972.8,624.0 1971.9,630.3 1972.2,636.5 1971.7,642.7 1972.5,648.8 1973.0,655.0 1983.0,659.0" fill="none" stroke="#e0cbcd" stroke-width="1.8" stroke-linejoin="round"/>
<polyline points="2041.0,640.0 2044.0,645.4 2046.5,651.2 2048.4,657.1 2052.9,661.8 2055.6,667.4 2058.8,672.7 2061.4,678.4 2064.5,683.8 2066.0,690.0 2068.9,695.5 2070.0,701.6 2070.7,707.9 2073.5,713.4 2076.3,719.0 2078.3,724.8 2079.5,730.9 2082.5,736.4 2085.1,742.0 2085.1,748.5 2088.0,754.0 2093.0,759.5 2099.3,763.7 2104.6,768.9 2109.0,775.0 2115.1,773.9 2121.1,776.3 2127.2,773.9 2133.2,775.4 2139.3,776.3 2145.3,773.7 2151.4,774.7 2157.4,774.9 2163.5,776.2 2169.6,774.1 2175.6,774.3 2181.7,774.3 2187.7,773.7 2193.8,775.5 2199.8,775.9 2205.9,774.8 2211.9,773.7 2218.0,775.0" fill="none" stroke="#e0cbcd" stroke-width="1.8" stroke-linejoin="round"/>
<polyline points="2218.0,775.0 2218.3,768.9 2219.7,762.9 2219.5,756.7 2221.1,750.7 2221.3,744.5 2222.0,738.5 2223.6,732.5 2224.1,726.4 2225.5,720.4 2227.6,714.5 2226.5,708.2 2229.0,702.4 2228.5,696.1 2231.3,690.3 2232.0,684.3 2231.4,678.0 2234.1,672.2 2234.0,666.0 2232.1,660.2 2229.0,655.0 2227.8,648.0 2228.7,641.0 2229.0,634.0 2222.7,632.3 2216.3,630.6 2209.5,631.6 2203.1,630.2 2196.9,627.7 2190.6,626.1 2183.7,627.3 2177.2,626.2 2171.0,624.0 2167.8,618.3 2163.1,613.8 2159.5,608.4 2156.0,603.0 2161.9,599.8 2166.9,595.5 2172.0,591.4 2177.0,587.0 2177.5,580.9 2176.6,574.9 2176.4,568.9 2175.4,563.0 2174.8,557.0 2174.0,551.0 2180.3,549.8 2186.7,552.1 2193.0,552.2 2199.3,550.6 2205.7,551.4 2212.0,549.6 2218.3,551.0 2224.7,551.3 2231.0,550.4 2237.3,550.8 2243.7,551.9 2250.0,551.0 2252.2,556.9 2252.6,563.1 2254.9,569.0 2255.3,575.3 2255.2,581.6 2257.2,587.6 2260.0,593.3 2259.0,599.9 2260.8,605.8 2262.4,611.8 2264.3,617.8 2265.0,624.0 2271.2,623.4 2277.3,623.1 2283.5,624.3 2289.7,622.7 2295.8,625.2 2302.0,624.0 2304.0,618.2 2308.3,613.8 2311.2,608.5 2313.7,603.0 2317.0,598.0 2324.8,594.9 2333.0,593.0" fill="none" stroke="#e0cbcd" stroke-width="1.8" stroke-linejoin="round"/>
<polyline points="2088.0,754.0 2086.7,760.0 2087.9,766.0 2087.1,772.0 2086.1,778.0 2087.7,784.0 2086.7,790.0 2086.3,796.0 2085.0,802.0 2087.4,808.0 2087.1,814.0 2086.1,820.0 2084.5,826.0 2084.3,832.0 2085.0,838.0 2087.3,844.0 2086.5,850.6 2088.8,856.6 2088.9,863.1 2090.3,869.2 2093.9,875.0 2092.8,881.7 2095.5,887.6 2097.6,893.6 2098.0,900.0 2097.0,906.5 2097.0,913.1 2094.0,919.2 2093.4,925.8 2093.5,932.4 2092.1,938.8 2090.2,945.1 2088.3,951.4 2088.0,958.0" fill="none" stroke="#e0cbcd" stroke-width="1.8" stroke-linejoin="round"/>
<polyline points="2218.0,760.0 2219.4,766.8 2220.2,773.6 2221.1,780.5 2222.4,787.3 2223.0,794.2 2224.0,801.0 2229.4,803.9 2235.1,806.3 2239.7,810.4 2245.5,812.7 2250.0,817.0 2249.5,823.3 2247.5,829.2 2244.0,834.7 2243.8,841.0 2242.0,847.0 2239.4,852.7 2239.0,859.0 2232.7,858.8 2226.6,860.6 2220.6,862.5 2214.3,862.6 2208.1,863.9 2201.7,863.2 2195.9,866.7 2189.6,866.6 2183.3,866.7 2177.1,867.8 2171.0,869.0 2165.2,871.2 2159.2,873.0 2153.9,876.7 2147.5,877.4 2141.7,879.6 2136.8,884.2 2130.7,885.8 2124.9,888.0 2119.0,890.0 2121.0,896.9 2122.2,904.0 2124.0,911.0 2130.2,908.1 2136.9,907.0 2143.5,905.4 2150.0,903.3 2156.0,900.0 2161.6,903.6 2168.3,904.6 2173.7,908.6 2179.7,911.4 2185.9,913.6 2192.0,916.0 2198.5,914.5 2204.6,911.4 2211.4,910.7 2217.4,907.3 2224.0,906.0 2230.8,907.0 2237.7,907.0 2244.5,908.6 2251.5,908.1 2258.2,909.6 2265.0,911.0 2270.2,914.2 2276.0,916.0" fill="none" stroke="#e0cbcd" stroke-width="1.8" stroke-linejoin="round"/>
<polyline points="2224.0,760.0 2230.2,760.1 2236.4,759.0 2242.6,760.6 2248.8,759.4 2255.0,760.0 2258.2,766.0 2264.1,769.9 2267.0,776.1 2272.5,780.2 2276.0,786.0 2282.7,788.1 2289.5,788.7 2296.6,787.4 2303.3,789.7 2310.3,789.4 2317.0,791.0" fill="none" stroke="#e0cbcd" stroke-width="1.8" stroke-linejoin="round"/>
<polyline points="2234.0,666.0 2238.8,670.4 2241.9,676.1 2246.5,680.7 2248.9,686.9 2253.3,691.6 2258.3,696.0 2262.1,701.1 2265.0,707.0 2269.2,711.5 2274.9,714.3 2278.4,719.5 2283.3,723.3 2288.1,727.0 2292.1,731.8 2297.2,735.2 2302.0,739.0 2309.5,739.2 2317.0,739.0" fill="none" stroke="#e0cbcd" stroke-width="1.8" stroke-linejoin="round"/>
<polyline points="1755.0,574.0 1761.3,573.2 1767.5,571.8 1774.0,572.1 1780.1,570.2 1786.5,570.1 1793.0,570.7 1799.0,567.5 1805.4,567.3 1811.8,567.6 1817.9,565.2 1824.3,564.6 1830.8,565.7 1837.0,564.0 1840.1,558.7 1840.2,552.4 1841.7,546.6 1845.7,541.6 1845.8,535.3 1848.4,529.8 1850.0,524.0" fill="none" stroke="#e0cbcd" stroke-width="1.8" stroke-linejoin="round"/>
<polyline points="1755.0,574.0 1758.9,579.0 1761.5,584.7 1765.6,589.5 1767.2,595.8 1771.9,600.3 1774.4,606.1 1776.7,612.0 1781.2,616.5 1783.1,622.7 1786.9,627.7 1790.6,632.7 1794.0,638.0 1798.1,642.6 1802.6,646.9 1807.4,650.8 1810.5,656.5 1816.1,659.7 1819.3,665.2 1823.9,669.3 1829.0,673.0 1832.7,678.3 1834.6,684.4 1836.6,690.5 1838.2,696.8 1842.3,701.9 1843.7,708.3 1846.8,713.9 1848.3,720.2 1850.4,726.2 1853.3,731.9 1857.3,737.1 1858.3,743.6 1861.7,749.1 1864.0,755.0" fill="none" stroke="#e0cbcd" stroke-width="1.8" stroke-linejoin="round"/>
<polyline points="1830.0,754.0 1823.7,752.5 1817.4,755.0 1811.2,752.9 1804.9,753.5 1798.6,752.0 1792.3,753.4 1786.0,753.0 1782.4,747.8 1776.4,745.1 1773.6,739.1 1768.0,735.9 1763.1,732.1 1758.9,727.5 1755.0,722.6 1749.4,719.5 1745.6,714.5 1740.4,710.9 1736.1,706.5 1731.8,702.0 1728.0,697.0" fill="none" stroke="#e0cbcd" stroke-width="1.8" stroke-linejoin="round"/>
<polyline points="1650.0,841.0 1656.8,839.3 1663.8,838.0 1670.2,834.9 1677.0,833.0" fill="none" stroke="#e0cbcd" stroke-width="1.8" stroke-linejoin="round"/>
<polyline points="1790.0,864.0 1796.7,865.0 1803.3,862.7 1810.0,863.7 1816.7,863.3 1823.4,864.5 1830.0,863.0" fill="none" stroke="#e0cbcd" stroke-width="1.8" stroke-linejoin="round"/>
<polyline points="1797.0,961.0 1803.5,956.9 1811.0,955.0 1813.0,961.0 1818.6,966.7 1826.2,969.5 1832.0,975.0 1837.9,976.7 1844.0,977.0 1847.7,982.0 1852.2,986.2 1857.0,990.0 1855.5,998.1 1853.0,1006.0 1854.6,1012.3 1854.8,1018.9 1855.3,1025.4 1857.4,1031.7 1859.0,1038.0 1865.0,1038.1 1871.0,1038.0 1879.6,1039.7 1888.0,1042.0 1892.3,1036.1 1897.5,1030.9 1901.3,1024.6 1906.0,1019.0 1904.8,1011.3 1903.7,1003.6 1902.0,996.0 1908.7,992.3 1915.0,988.0 1921.1,987.4 1927.1,988.6 1933.0,990.0 1934.4,983.9 1934.9,977.7 1936.4,971.6 1935.1,965.2 1936.4,959.1 1938.0,953.0 1932.5,948.5 1927.0,944.0 1923.4,937.8 1917.9,932.9 1915.0,926.2 1910.0,920.9 1906.0,915.0 1904.8,907.4 1905.6,899.6 1904.0,892.0 1898.0,890.0 1893.6,884.9 1887.2,883.5 1882.0,880.0" fill="none" stroke="#e0cbcd" stroke-width="1.8" stroke-linejoin="round"/>
<polyline points="1888.0,1042.0 1883.3,1046.6 1880.5,1052.6 1877.0,1058.0 1876.6,1064.8 1875.9,1071.5 1874.8,1078.2 1875.0,1085.0 1876.2,1093.9 1880.0,1102.0 1880.2,1108.3 1880.8,1114.7 1880.0,1121.0" fill="none" stroke="#e0cbcd" stroke-width="1.8" stroke-linejoin="round"/>
<polyline points="1875.0,1085.0 1880.0,1091.0 1887.3,1089.7 1894.7,1091.3 1902.0,1091.0 1904.7,1085.2 1909.5,1081.0 1914.3,1076.8 1917.0,1071.0 1924.7,1070.4 1932.3,1072.3 1940.0,1071.0" fill="none" stroke="#e0cbcd" stroke-width="1.8" stroke-linejoin="round"/>
<polyline points="1933.0,990.0 1937.2,995.5 1942.3,1000.1 1946.0,1006.0 1945.6,1012.3 1944.7,1018.7 1946.0,1025.0 1953.0,1023.7 1960.0,1025.0" fill="none" stroke="#e0cbcd" stroke-width="1.8" stroke-linejoin="round"/>
<polyline points="1938.0,953.0 1945.6,954.9 1952.3,959.5 1960.0,961.0" fill="none" stroke="#e0cbcd" stroke-width="1.8" stroke-linejoin="round"/>
<polyline points="1923.0,880.0 1926.2,886.1 1928.1,892.8 1931.0,899.0 1937.1,901.4 1942.1,905.8 1948.3,907.9 1954.0,911.0 1960.0,917.0" fill="none" stroke="#e0cbcd" stroke-width="1.8" stroke-linejoin="round"/>
<polyline points="1794.0,1106.0 1801.7,1106.7 1809.3,1107.5 1817.0,1108.0 1822.2,1112.1 1828.6,1114.2 1834.0,1118.0 1836.5,1124.4 1838.0,1131.0 1844.6,1128.1 1850.6,1124.3 1857.0,1121.0 1859.0,1118.0 1865.8,1113.7 1873.0,1110.0 1880.0,1108.0" fill="none" stroke="#e0cbcd" stroke-width="1.8" stroke-linejoin="round"/>
<polyline points="1838.0,1131.0 1836.3,1138.2 1837.9,1145.6 1835.2,1152.7 1836.0,1160.0 1836.1,1166.7 1834.8,1173.3 1834.0,1180.0" fill="none" stroke="#e0cbcd" stroke-width="1.8" stroke-linejoin="round"/>
<polyline points="1857.0,1121.0 1857.2,1127.6 1857.6,1134.2 1855.9,1140.8 1857.0,1147.4 1857.0,1154.0 1865.0,1160.0 1865.5,1166.8 1863.0,1173.3 1863.0,1180.0" fill="none" stroke="#e0cbcd" stroke-width="1.8" stroke-linejoin="round"/>
<polyline points="1780.0,1154.0 1786.0,1151.9 1792.0,1150.0 1797.5,1153.6 1803.5,1156.4 1809.0,1160.0 1808.5,1166.8 1811.7,1173.2 1811.0,1180.0" fill="none" stroke="#e0cbcd" stroke-width="1.8" stroke-linejoin="round"/>
<polyline points="1145.0,296.0 1144.2,304.6 1141.2,312.7 1139.0,321.0 1139.4,329.2 1140.9,337.1 1143.0,345.0 1147.4,351.5 1153.2,356.8 1157.2,363.7 1163.0,369.0 1167.9,375.4 1174.2,380.7 1178.0,388.0 1180.8,395.9 1184.9,403.5 1186.0,412.0 1188.7,418.9 1194.0,424.0 1201.7,426.3 1209.7,424.7 1217.6,425.3 1225.3,427.6 1233.3,426.3 1241.0,428.0 1249.2,428.6 1257.2,430.4 1265.1,432.7 1273.0,435.0 1279.9,437.9 1286.5,441.5 1294.3,441.4 1300.5,446.3 1307.9,447.4 1314.5,451.0 1321.6,453.2 1329.4,453.4 1336.0,457.0 1343.3,460.5 1351.0,463.0 1348.1,469.8 1343.0,475.0 1346.7,484.1 1347.0,494.0 1354.6,496.7 1361.6,500.9 1369.4,503.2 1377.0,506.0 1382.5,510.6 1385.4,517.5 1391.0,522.0 1400.0,525.0" fill="none" stroke="#ddcbcb" stroke-width="3.2" stroke-linejoin="round"/>
<polyline points="1400.0,525.0 1391.7,524.4 1383.3,525.4 1375.0,524.0 1366.7,523.9 1358.7,525.5 1351.0,528.6 1343.0,530.0 1340.1,538.9 1339.3,548.3 1336.0,557.0 1330.0,563.1 1323.1,568.3 1316.0,573.0 1308.6,574.0 1301.7,577.4 1293.8,576.5 1287.2,581.4 1279.8,582.6 1272.6,584.7 1265.0,585.0 1256.8,585.4 1249.1,588.1 1241.0,589.0 1234.9,594.5 1229.0,600.3 1222.1,604.8 1216.4,610.9 1210.0,616.0 1205.5,623.3 1199.5,629.5 1194.0,636.0 1189.5,641.5 1185.0,647.0 1179.0,651.0 1179.0,663.0 1170.5,666.0 1162.7,670.4 1155.0,675.0 1150.5,682.7 1147.0,691.0 1136.7,691.6 1127.0,695.0 1123.7,702.8 1120.1,710.5 1116.0,718.0 1108.1,720.3 1100.1,722.3 1091.9,723.4 1084.0,726.0 1079.4,732.3 1072.6,736.1 1066.7,740.9 1061.0,746.0 1055.3,751.2 1050.1,756.8 1042.5,759.7 1037.0,765.0 1036.2,773.5 1031.8,780.9 1030.7,789.4 1027.0,797.0 1027.0,804.5 1024.8,811.6 1023.5,818.9 1021.6,826.0 1018.0,832.7 1017.0,840.0 1015.2,847.9 1015.5,856.1 1014.0,864.0 1007.3,867.3 1001.2,871.7 994.8,875.4 987.7,878.0 982.0,883.0 977.2,889.1 970.4,893.4 966.0,900.0 972.0,895.5 977.4,890.5 981.3,883.7 988.0,880.0 983.8,885.9 978.7,890.8 972.8,894.8 966.1,898.0 962.0,904.0 956.8,910.3 952.9,917.4 951.2,925.7 946.0,932.0 938.5,933.1 931.2,934.7 923.9,936.4 916.7,938.3 910.0,942.3 902.6,944.0 894.8,943.7 887.6,945.7 880.2,947.0 873.3,950.4 866.0,952.0 864.6,962.0 866.0,972.0 864.5,979.1 859.1,984.7 856.7,991.5 855.9,998.9 854.1,1005.9 850.0,1012.0 846.8,1018.9 843.4,1025.7 841.5,1033.2 838.0,1040.0 837.1,1048.5 834.0,1056.2 829.7,1063.7 829.8,1072.4 826.0,1080.0 819.7,1086.1 816.7,1094.5 811.9,1101.6 806.0,1108.0 798.6,1113.2 789.2,1114.5 782.0,1120.0 772.0,1122.0" fill="none" stroke="#ddcbcb" stroke-width="3.2" stroke-linejoin="round"/>
<polyline points="1400.0,525.0 1407.5,522.0 1415.7,521.8 1423.1,518.4 1431.4,518.5 1439.0,516.0 1448.9,518.4 1459.0,520.0 1466.5,521.9 1473.5,525.1 1480.9,527.2 1488.8,527.8 1495.6,531.8 1502.9,534.4 1510.3,536.4 1517.3,540.0 1525.0,541.0 1531.5,544.3 1538.7,545.6 1545.6,547.6 1552.0,551.0 1559.6,548.7 1567.6,550.1 1575.3,548.7 1583.0,547.0 1590.1,546.2 1597.0,544.4 1604.0,543.4 1610.8,541.2 1618.0,541.0 1625.1,542.4 1632.6,542.4 1639.4,545.4 1646.6,546.8 1653.7,548.3 1661.0,549.0 1668.6,551.4 1676.1,554.2 1683.0,558.2 1690.0,562.0" fill="none" stroke="#ddcbcb" stroke-width="3.2" stroke-linejoin="round"/>
<polyline points="1690.0,562.0 1696.4,558.1 1700.2,551.7 1706.1,547.2 1711.3,542.1 1715.2,535.7 1720.0,530.2 1726.5,526.4 1730.5,520.1 1736.3,515.6 1742.8,511.8 1747.9,506.7 1751.2,499.6 1756.2,494.4 1761.8,489.6 1768.5,486.1 1771.6,478.9 1778.0,475.0 1781.9,468.9 1786.2,463.1 1790.9,457.7 1796.7,453.2 1800.4,446.9 1805.6,442.0 1811.2,437.2 1815.8,431.8 1819.6,425.6 1825.3,421.0 1829.3,415.0 1834.7,410.1 1837.7,403.3 1842.7,398.1 1847.9,393.1 1853.6,388.5 1857.0,382.0 1856.2,374.9 1854.4,368.0 1852.4,361.2 1852.0,354.0 1855.1,346.6 1858.7,339.5 1864.9,333.8 1868.4,326.7 1871.0,319.0 1871.7,311.2 1869.8,303.7 1869.0,296.0" fill="none" stroke="#ddcbcb" stroke-width="3.2" stroke-linejoin="round"/>
<polyline points="1690.0,562.0 1690.4,569.3 1692.6,576.2 1695.0,582.9 1698.7,589.3 1700.3,596.3 1700.9,603.6 1702.6,610.6 1707.3,616.7 1708.7,623.7 1708.1,631.3 1712.7,637.5 1712.8,644.9 1715.9,651.5 1716.8,658.7 1718.0,665.8 1720.9,672.4 1723.5,679.1 1725.7,685.9 1727.0,693.0 1726.6,700.0 1726.5,707.0 1727.3,714.0 1727.1,721.0 1726.9,728.0 1727.0,735.0 1732.7,741.0 1737.9,747.3 1741.8,754.7 1747.0,761.0 1750.2,768.0 1750.3,775.8 1751.4,783.3 1753.2,790.6 1757.0,797.5 1758.0,805.0 1764.8,808.7 1770.5,814.3 1778.0,817.0 1779.3,824.7 1777.8,832.8 1781.5,840.3 1780.0,848.3 1782.0,856.0 1785.8,862.9 1785.8,870.8 1787.4,878.3 1790.5,885.4 1792.4,892.8 1795.0,900.0 1793.8,907.4 1793.9,914.7 1797.2,921.9 1796.3,929.3 1798.3,936.6 1797.4,944.0 1798.6,951.3 1798.9,958.6 1797.6,966.0 1799.8,973.3 1799.9,980.6 1800.8,987.9 1798.2,995.4 1800.6,1002.6 1800.0,1010.0 1800.8,1017.4 1798.0,1024.4 1796.9,1031.6 1796.4,1038.8 1795.9,1046.1 1795.2,1053.3 1793.8,1060.5 1794.5,1067.9 1793.0,1075.0 1790.5,1081.9 1789.7,1089.2 1787.9,1096.2 1786.5,1103.3 1785.4,1110.5 1785.2,1117.8 1784.0,1125.0 1786.2,1133.3 1787.7,1141.7 1790.5,1149.8 1793.0,1158.0" fill="none" stroke="#ddcbcb" stroke-width="3.2" stroke-linejoin="round"/>
<polyline points="1775.0,1160.0 1769.5,1154.6 1762.1,1151.9 1756.8,1146.3 1750.8,1141.6 1743.3,1139.2 1737.9,1133.6 1730.8,1130.6 1724.1,1126.8 1718.2,1122.0 1712.8,1116.5 1706.0,1113.0 1699.3,1115.7 1692.0,1116.0 1685.8,1121.4 1680.8,1128.0 1675.4,1134.2 1669.0,1139.4 1663.0,1145.0 1660.0,1151.8 1656.4,1158.2 1651.7,1164.1 1648.2,1170.6 1647.1,1178.3 1641.3,1183.6 1639.1,1190.8 1634.7,1196.8 1631.8,1203.6 1629.3,1210.7 1626.9,1217.7 1621.3,1223.2 1617.8,1229.6 1616.0,1237.0 1615.2,1244.2 1616.7,1251.5 1613.8,1258.6 1613.7,1265.8 1613.0,1273.0 1612.3,1280.3 1612.0,1287.5 1612.5,1294.7 1613.0,1302.0 1619.8,1298.2 1627.0,1295.0 1629.1,1302.2 1631.4,1309.4 1632.7,1316.9 1635.4,1323.9 1638.0,1331.0 1642.0,1337.1 1647.6,1341.7 1652.3,1347.2 1656.1,1353.5 1661.4,1358.4 1667.0,1363.0 1673.6,1367.0 1681.0,1368.8 1688.9,1369.4 1695.7,1373.0 1703.0,1375.1 1710.1,1377.6 1717.0,1381.0 1724.4,1379.9 1731.8,1380.0 1739.2,1381.5 1746.6,1382.8 1754.0,1383.3 1761.4,1383.9 1768.8,1382.7 1776.2,1380.9 1783.6,1381.7 1791.0,1383.0 1789.9,1375.8 1793.3,1368.9 1791.9,1361.7 1793.8,1354.7 1793.3,1347.6 1794.3,1340.5 1795.8,1333.5 1795.6,1326.4 1794.0,1319.1 1796.5,1312.2 1796.0,1305.0 1797.0,1298.0 1800.1,1291.2 1798.9,1283.6 1800.2,1276.4 1804.0,1269.8 1803.6,1262.3 1803.8,1255.0 1807.7,1248.3 1808.0,1241.0 1809.8,1233.8 1808.5,1226.5 1807.6,1219.1 1810.4,1212.0 1808.8,1204.6 1808.7,1197.3 1808.3,1190.0 1811.6,1182.9 1809.5,1175.5 1809.4,1168.2 1811.0,1161.0 1801.9,1160.0 1793.0,1158.0 1783.9,1158.3 1775.0,1160.0" fill="none" stroke="#ddcbcb" stroke-width="3.2" stroke-linejoin="round"/>
<polyline points="1797.0,1298.0 1805.8,1300.7 1815.0,1302.0 1822.1,1303.6 1829.4,1300.6 1836.5,1304.2 1843.7,1303.9 1851.0,1301.3 1858.1,1304.2 1865.3,1304.4 1872.5,1302.4 1879.6,1305.4 1886.9,1303.4 1894.1,1303.9 1901.2,1304.8 1908.4,1305.1 1915.6,1305.5 1922.8,1304.0 1930.0,1305.0" fill="none" stroke="#ddcbcb" stroke-width="3.2" stroke-linejoin="round"/>
<polyline points="1038.0,1783.0 1044.8,1779.0 1052.5,1776.9 1060.3,1775.0 1067.0,1770.7 1074.0,1767.0 1079.2,1761.7 1084.0,1756.0 1088.8,1750.3 1095.0,1746.0 1100.5,1740.6 1103.8,1733.7 1106.2,1726.3 1111.3,1720.6 1115.0,1714.0 1120.6,1708.5 1126.1,1702.9 1129.4,1695.5 1135.0,1690.0 1137.6,1683.1 1140.4,1676.3 1144.9,1670.3 1149.2,1664.3 1151.0,1657.0 1158.1,1655.8 1164.3,1651.8 1171.4,1650.6 1177.9,1647.5 1184.8,1645.8 1192.0,1645.0 1198.0,1639.0 1203.1,1632.1 1209.4,1626.4 1216.0,1621.0 1222.5,1617.3 1229.6,1615.1 1237.0,1613.7 1243.0,1608.8 1250.3,1607.2 1257.0,1604.0 1263.9,1602.6 1270.9,1601.3 1277.9,1600.3 1285.0,1600.0 1289.3,1605.7 1294.1,1610.9 1299.4,1615.6 1304.0,1621.0 1310.0,1625.0 1316.2,1629.7 1323.7,1632.4 1330.0,1637.0 1334.8,1642.5 1337.8,1649.1 1341.7,1655.2 1346.0,1661.0 1351.3,1666.0 1356.9,1670.5 1363.0,1674.3 1368.4,1679.0 1374.9,1682.2 1380.8,1686.4 1387.0,1690.0 1389.4,1697.1 1393.7,1703.3 1396.0,1710.5 1399.1,1717.3 1403.6,1723.4 1407.0,1730.0 1404.2,1737.1 1400.7,1743.9 1396.6,1750.3 1393.5,1757.2 1390.3,1764.2 1387.0,1771.0 1381.0,1777.3 1373.9,1782.4 1367.8,1788.5 1362.0,1795.0 1360.4,1802.4 1360.3,1809.8 1363.8,1817.2 1362.4,1824.6 1362.0,1832.0 1355.5,1835.3 1349.9,1839.9 1343.8,1843.6 1338.0,1848.0 1332.0,1852.0 1325.4,1854.8 1318.2,1856.4 1312.1,1860.3 1306.0,1864.0 1298.7,1864.4 1291.6,1866.0 1284.6,1867.7 1277.7,1869.6 1270.6,1871.1 1263.7,1872.9 1257.0,1876.0 1249.7,1876.5 1243.4,1880.3 1236.6,1882.3 1229.7,1884.2 1222.6,1885.1 1216.0,1888.0 1208.2,1885.5 1200.1,1885.8 1192.0,1885.9 1183.9,1886.3 1176.0,1884.0 1167.7,1884.5 1159.4,1884.0 1151.3,1882.9 1143.0,1882.6 1135.0,1880.0 1131.3,1886.1 1127.6,1892.1 1121.7,1896.7 1120.0,1904.1 1116.2,1910.1 1109.8,1914.3 1107.0,1921.0 1110.0,1930.0" fill="none" stroke="#ddcbcb" stroke-width="3.2" stroke-linejoin="round"/>
<polyline points="1038.0,1783.0 1044.4,1788.8 1047.8,1797.0 1054.0,1803.0 1058.4,1809.3 1065.0,1813.4 1070.0,1819.0 1073.9,1825.3 1077.2,1831.8 1080.7,1838.2 1083.4,1845.1 1086.6,1851.7 1087.6,1859.3 1092.9,1864.9 1095.0,1872.0 1094.1,1880.3 1091.0,1888.0 1092.8,1895.3 1096.0,1901.9 1101.9,1907.2 1104.4,1914.1 1107.0,1921.0" fill="none" stroke="#ddcbcb" stroke-width="3.2" stroke-linejoin="round"/>
<polygon points="2249.0,296.0 2253.0,314.0 2261.0,322.0 2266.0,335.0 2263.0,351.0 2267.0,375.0 2266.0,396.0 2277.0,417.0 2290.0,438.0 2292.0,462.0 2299.0,491.0 2299.0,528.0 2296.0,567.0 2311.0,580.0 2316.0,562.0 2310.0,533.0 2316.0,525.0 2324.0,514.0 2332.0,554.0 2324.0,594.0 2327.0,633.0 2332.0,654.0 2341.0,650.0 2329.0,681.0 2320.0,716.0 2312.0,766.0 2327.0,820.0 2323.0,843.0 2306.0,874.0 2279.0,913.0 2263.0,924.0 2198.0,959.0 2167.0,969.0 2121.0,986.0 2066.0,1009.0 2024.0,1025.0 1985.0,1044.0 1947.0,1067.0 1920.0,1091.0 1909.0,1114.0 1895.0,1138.0 1883.0,1158.0 1872.0,1156.0 1870.0,1158.0 1872.0,1161.0 1879.0,1162.0 1886.0,1170.0 1894.0,1181.0 1900.0,1195.0 1909.0,1201.0 1917.0,1211.0 1924.0,1214.0 1929.0,1212.0 1931.0,1188.0 1938.0,1181.0 1939.0,1182.0 1935.0,1210.0 1933.0,1242.0 1931.0,1270.0 1931.0,1305.0 1919.0,1356.0 1897.0,1435.0 1885.0,1492.0 1874.0,1543.0 1851.0,1583.0 1817.0,1622.0 1761.0,1662.0 1698.0,1736.0 1664.0,1781.0 1591.0,1924.0 2431.0,1924.0 2431.0,296.0" fill="#d7e5ea"/>
<polyline points="2341.0,650.0 2329.0,681.0 2320.0,716.0 2312.0,766.0 2327.0,820.0 2323.0,843.0 2306.0,874.0 2279.0,913.0 2263.0,924.0 2198.0,959.0 2167.0,969.0 2121.0,986.0 2066.0,1009.0 2024.0,1025.0 1985.0,1044.0 1947.0,1067.0 1920.0,1091.0 1909.0,1114.0" fill="none" stroke="#a9bfcc" stroke-width="3.6"/>
<polyline points="1939.0,1182.0 1935.0,1210.0 1933.0,1242.0 1931.0,1270.0 1931.0,1305.0 1919.0,1356.0 1897.0,1435.0 1885.0,1492.0 1874.0,1543.0 1851.0,1583.0 1817.0,1622.0 1761.0,1662.0 1698.0,1736.0 1664.0,1781.0 1591.0,1924.0" fill="none" stroke="#b8cbd5" stroke-width="2.5"/>
<text x="1045" y="372.5" font-family="Liberation Sans, sans-serif" font-weight="normal" font-size="24.5" textLength="143.3" lengthAdjust="spacingAndGlyphs" fill="#fbfbfa" stroke="#fbfbfa" stroke-width="5" stroke-linejoin="round">Francistown</text>
<text x="1045" y="372.5" font-family="Liberation Sans, sans-serif" font-weight="normal" font-size="24.5" textLength="143.3" lengthAdjust="spacingAndGlyphs" fill="#66737f" stroke="#66737f" stroke-width="0.8" stroke-linejoin="round">Francistown</text>
<text x="950.7" y="572.8" font-family="Liberation Sans, sans-serif" font-weight="normal" font-size="23.5" textLength="89.1" lengthAdjust="spacingAndGlyphs" fill="#fbfbfa" stroke="#fbfbfa" stroke-width="5" stroke-linejoin="round">Serowe</text>
<text x="950.7" y="572.8" font-family="Liberation Sans, sans-serif" font-weight="normal" font-size="23.5" textLength="89.1" lengthAdjust="spacingAndGlyphs" fill="#66737f" stroke="#66737f" stroke-width="0.8" stroke-linejoin="round">Serowe</text>
<text x="1463.5" y="563.5" font-family="Liberation Sans, sans-serif" font-weight="normal" font-size="22" textLength="72.4" lengthAdjust="spacingAndGlyphs" fill="#fbfbfa" stroke="#fbfbfa" stroke-width="5" stroke-linejoin="round">Musina</text>
<text x="1463.5" y="563.5" font-family="Liberation Sans, sans-serif" font-weight="normal" font-size="22" textLength="72.4" lengthAdjust="spacingAndGlyphs" fill="#66737f" stroke="#66737f" stroke-width="0.8" stroke-linejoin="round">Musina</text>
<text x="1356.6" y="821" font-family="Liberation Sans, sans-serif" font-weight="normal" font-size="22" textLength="114.7" lengthAdjust="spacingAndGlyphs" fill="#fbfbfa" stroke="#fbfbfa" stroke-width="5" stroke-linejoin="round">Polokwane</text>
<text x="1356.6" y="821" font-family="Liberation Sans, sans-serif" font-weight="normal" font-size="22" textLength="114.7" lengthAdjust="spacingAndGlyphs" fill="#66737f" stroke="#66737f" stroke-width="0.8" stroke-linejoin="round">Polokwane</text>
<text x="817.9" y="947.9" font-family="Liberation Sans, sans-serif" font-weight="normal" font-size="25" textLength="113.8" lengthAdjust="spacingAndGlyphs" fill="#fbfbfa" stroke="#fbfbfa" stroke-width="5" stroke-linejoin="round">Gaborone</text>
<text x="817.9" y="947.9" font-family="Liberation Sans, sans-serif" font-weight="normal" font-size="25" textLength="113.8" lengthAdjust="spacingAndGlyphs" fill="#66737f" stroke="#66737f" stroke-width="0.8" stroke-linejoin="round">Gaborone</text>
<text x="931.7" y="1319.2" font-family="Liberation Sans, sans-serif" font-weight="normal" font-size="24" textLength="115.0" lengthAdjust="spacingAndGlyphs" fill="#fbfbfa" stroke="#fbfbfa" stroke-width="5" stroke-linejoin="round">Klerksdorp</text>
<text x="931.7" y="1319.2" font-family="Liberation Sans, sans-serif" font-weight="normal" font-size="24" textLength="115.0" lengthAdjust="spacingAndGlyphs" fill="#66737f" stroke="#66737f" stroke-width="0.8" stroke-linejoin="round">Klerksdorp</text>
<text x="1117.4" y="1286" font-family="Liberation Sans, sans-serif" font-weight="normal" font-size="22.5" textLength="127.7" lengthAdjust="spacingAndGlyphs" fill="#fbfbfa" stroke="#fbfbfa" stroke-width="5" stroke-linejoin="round">Vereeniging</text>
<text x="1117.4" y="1286" font-family="Liberation Sans, sans-serif" font-weight="normal" font-size="22.5" textLength="127.7" lengthAdjust="spacingAndGlyphs" fill="#66737f" stroke="#66737f" stroke-width="0.8" stroke-linejoin="round">Vereeniging</text>
<text x="952.6" y="1511" font-family="Liberation Sans, sans-serif" font-weight="normal" font-size="25.5" textLength="96.5" lengthAdjust="spacingAndGlyphs" fill="#fbfbfa" stroke="#fbfbfa" stroke-width="5" stroke-linejoin="round">Welkom</text>
<text x="952.6" y="1511" font-family="Liberation Sans, sans-serif" font-weight="normal" font-size="25.5" textLength="96.5" lengthAdjust="spacingAndGlyphs" fill="#66737f" stroke="#66737f" stroke-width="0.8" stroke-linejoin="round">Welkom</text>
<text x="843" y="1707" font-family="Liberation Sans, sans-serif" font-weight="normal" font-size="26" textLength="157.5" lengthAdjust="spacingAndGlyphs" fill="#fbfbfa" stroke="#fbfbfa" stroke-width="5" stroke-linejoin="round">Bloemfontein</text>
<text x="843" y="1707" font-family="Liberation Sans, sans-serif" font-weight="normal" font-size="26" textLength="157.5" lengthAdjust="spacingAndGlyphs" fill="#66737f" stroke="#66737f" stroke-width="0.8" stroke-linejoin="round">Bloemfontein</text>
<text x="1072.3" y="1740.2" font-family="Liberation Sans, sans-serif" font-weight="normal" font-size="25" textLength="83.1" lengthAdjust="spacingAndGlyphs" fill="#fbfbfa" stroke="#fbfbfa" stroke-width="5" stroke-linejoin="round">Maseru</text>
<text x="1072.3" y="1740.2" font-family="Liberation Sans, sans-serif" font-weight="normal" font-size="25" textLength="83.1" lengthAdjust="spacingAndGlyphs" fill="#66737f" stroke="#66737f" stroke-width="0.8" stroke-linejoin="round">Maseru</text>
<text x="1157.5" y="1788.9" font-family="Liberation Sans, sans-serif" font-weight="normal" font-size="22.5" textLength="109.5" lengthAdjust="spacingAndGlyphs" fill="#fbfbfa" stroke="#fbfbfa" stroke-width="5" stroke-linejoin="round">LESOTHO</text>
<text x="1157.5" y="1788.9" font-family="Liberation Sans, sans-serif" font-weight="normal" font-size="22.5" textLength="109.5" lengthAdjust="spacingAndGlyphs" fill="#66737f" stroke="#66737f" stroke-width="0.8" stroke-linejoin="round">LESOTHO</text>
<text x="2254.8" y="814.3" font-family="Liberation Sans, sans-serif" font-weight="normal" font-size="22" textLength="116.2" lengthAdjust="spacingAndGlyphs" fill="#fbfbfa" stroke="#fbfbfa" stroke-width="5" stroke-linejoin="round">Inhambane</text>
<text x="2254.8" y="814.3" font-family="Liberation Sans, sans-serif" font-weight="normal" font-size="22" textLength="116.2" lengthAdjust="spacingAndGlyphs" fill="#66737f" stroke="#66737f" stroke-width="0.8" stroke-linejoin="round">Inhambane</text>
<text x="1616.4" y="1228" font-family="Liberation Sans, sans-serif" font-weight="normal" font-size="22.6" textLength="105.6" lengthAdjust="spacingAndGlyphs" fill="#fbfbfa" stroke="#fbfbfa" stroke-width="5" stroke-linejoin="round">Mbabane</text>
<text x="1616.4" y="1228" font-family="Liberation Sans, sans-serif" font-weight="normal" font-size="22.6" textLength="105.6" lengthAdjust="spacingAndGlyphs" fill="#66737f" stroke="#66737f" stroke-width="0.8" stroke-linejoin="round">Mbabane</text>
<text x="2009.6" y="1011.3" font-family="Liberation Sans, sans-serif" font-weight="normal" font-size="22.7" textLength="78.8" lengthAdjust="spacingAndGlyphs" fill="#fbfbfa" stroke="#fbfbfa" stroke-width="5" stroke-linejoin="round">Xai-Xai</text>
<text x="2009.6" y="1011.3" font-family="Liberation Sans, sans-serif" font-weight="normal" font-size="22.7" textLength="78.8" lengthAdjust="spacingAndGlyphs" fill="#66737f" stroke="#66737f" stroke-width="0.8" stroke-linejoin="round">Xai-Xai</text>
<text x="1464.6" y="1790" font-family="Liberation Sans, sans-serif" font-weight="normal" font-size="22.5" textLength="175.4" lengthAdjust="spacingAndGlyphs" fill="#fbfbfa" stroke="#fbfbfa" stroke-width="5" stroke-linejoin="round">Pietermaritzburg</text>
<text x="1464.6" y="1790" font-family="Liberation Sans, sans-serif" font-weight="normal" font-size="22.5" textLength="175.4" lengthAdjust="spacingAndGlyphs" fill="#66737f" stroke="#66737f" stroke-width="0.8" stroke-linejoin="round">Pietermaritzburg</text>
<line x1="1217.7" y1="1108.9" x2="1885.8" y2="1142.5" stroke="#2f56e0" stroke-width="3.6"/>
<line x1="1217.7" y1="1108.9" x2="1657.8" y2="1210" stroke="#2f56e0" stroke-width="3.6"/>
<line x1="1885.8" y1="1142.5" x2="1657.8" y2="1210" stroke="#2f56e0" stroke-width="3.6"/>
<polygon points="1558.6,1125.8 1540.2,1133.9 1541.1,1115.9" fill="#2f56e0"/>
<polygon points="1444.9,1160.5 1425.4,1165.3 1429.4,1147.7" fill="#2f56e0"/>
<polygon points="1765.3,1176.3 1780.0,1162.6 1785.1,1179.8" fill="#2f56e0"/>
<circle cx="1217.7" cy="1058.5" r="10.2" fill="#dd4b49" stroke="#6e6e6e" stroke-width="2.2"/>
<circle cx="1217.7" cy="1159.3" r="10.2" fill="#dd4b49" stroke="#6e6e6e" stroke-width="2.2"/>
<circle cx="1263.1" cy="1159.3" r="10.2" fill="#dd4b49" stroke="#6e6e6e" stroke-width="2.2"/>
<circle cx="1901.3" cy="1125.2" r="10.2" fill="#86f5f5" stroke="#6e6e6e" stroke-width="2.2"/>
<circle cx="1885.8" cy="1193" r="10.2" fill="#dd4b49" stroke="#6e6e6e" stroke-width="2.2"/>
<circle cx="1659.6" cy="1193.7" r="10.2" fill="#86f5f5" stroke="#6e6e6e" stroke-width="2.2"/>
<circle cx="1657.8" cy="1260.4" r="10.2" fill="#dd4b49" stroke="#6e6e6e" stroke-width="2.2"/>
<circle cx="1217.7" cy="1108.9" r="14.2" fill="#4f80e8" stroke="#6e6e6e" stroke-width="2.2"/>
<circle cx="1885.8" cy="1142.5" r="14.2" fill="#4f80e8" stroke="#6e6e6e" stroke-width="2.2"/>
<circle cx="1657.8" cy="1210" r="14.2" fill="#4f80e8" stroke="#6e6e6e" stroke-width="2.2"/>
</svg>
<div class="a" style="left:2213.0px;top:245.0px;width:80.0px;height:225.0px;background:#f1f2f4;border-radius:12px;box-shadow:0 0 0 1.5px rgba(210,213,220,0.9),0 2px 6px rgba(0,0,0,0.08);"></div>
<svg class="ic" style="left:2236.0px;top:270.0px;width:32px;height:32px;color:#111827;" viewBox="0 0 24 24" stroke-width="2"><path d="m12.83 2.18a2 2 0 0 0-1.66 0L2.6 6.08a1 1 0 0 0 0 1.83l8.58 3.91a2 2 0 0 0 1.66 0l8.58-3.9a1 1 0 0 0 0-1.83Z"/><path d="m22 17.65-9.17 4.16a2 2 0 0 1-1.66 0L2 17.65"/><path d="m22 12.65-9.17 4.16a2 2 0 0 1-1.66 0L2 12.65"/></svg>
<svg class="ic" style="left:2236.0px;top:341.5px;width:32px;height:32px;color:#111827;" viewBox="0 0 24 24" stroke-width="2"><circle cx="13.5" cy="6.5" r=".5" fill="currentColor"/><circle cx="17.5" cy="10.5" r=".5" fill="currentColor"/><circle cx="8.5" cy="7.5" r=".5" fill="currentColor"/><circle cx="6.5" cy="12.5" r=".5" fill="currentColor"/><path d="M12 2C6.5 2 2 6.5 2 12s4.5 10 10 10c.926 0 1.648-.746 1.648-1.688 0-.437-.18-.835-.437-1.125-.29-.289-.438-.652-.438-1.125a1.64 1.64 0 0 1 1.668-1.668h1.996c3.051 0 5.555-2.503 5.555-5.554C21.965 6.012 17.461 2 12 2z"/></svg>
<svg class="ic" style="left:2236.0px;top:414.5px;width:32px;height:32px;color:#111827;" viewBox="0 0 24 24" stroke-width="2"><path d="M14.5 4h-5L7 7H4a2 2 0 0 0-2 2v9a2 2 0 0 0 2 2h16a2 2 0 0 0 2-2V9a2 2 0 0 0-2-2h-3l-2.5-3z"/><circle cx="12" cy="13" r="3"/></svg>
<div class="a" style="left:967.0px;top:1758.0px;width:151.0px;height:29.5px;box-sizing:border-box;border:2.5px solid #2f3640;border-top:none;background:rgba(255,255,255,0.8);"></div>
<div class="t" style="right:1917.0px;top:1763.3px;font-size:20.5px;color:#333;font-weight:normal;font-family:'Liberation Sans',sans-serif;">100 km</div>
<div class="a" style="left:660.0px;top:1808.0px;width:479.0px;height:40.0px;background:rgba(255,255,255,0.55);"></div>
<div class="t" style="left:670.0px;top:1815.9px;font-size:24.5px;color:#333;font-weight:normal;font-family:'Liberation Sans',sans-serif;">&copy; MapTiler &copy; OpenStreetMap contributors</div>
<div class="a" style="left:1286.5px;top:1701.0px;width:404.0px;height:106.0px;background:#f1f2f4;border-radius:14px;box-shadow:0 0 0 1.5px rgba(210,213,220,0.9),0 4px 10px rgba(0,0,0,0.08);"></div>
<div class="a" style="left:1304.0px;top:1718.0px;width:72.0px;height:72.0px;background:#e3e5ea;border-radius:10px;"></div>
<svg class="ic" style="left:1323.8px;top:1737.6px;width:32px;height:32px;color:#5b84f2;" viewBox="0 0 24 24" stroke-width="2"><path d="M4.037 4.688a.495.495 0 0 1 .651-.651l16 6.5a.5.5 0 0 1-.063.947l-6.124 1.58a2 2 0 0 0-1.438 1.435l-1.579 6.126a.5.5 0 0 1-.947.063z"/></svg>
<svg class="ic" style="left:1411.2px;top:1737.6px;width:32px;height:32px;color:#111827;" viewBox="0 0 24 24" stroke-width="2"><path d="M7 22a5 5 0 0 1-2-4"/><path d="M3.3 14A6.8 6.8 0 0 1 2 10c0-4.4 4.5-8 10-8s10 3.6 10 8-4.5 8-10 8a12 12 0 0 1-5-1"/><path d="M5 18a2 2 0 1 0 0-4 2 2 0 0 0 0 4z"/></svg>
<svg class="ic" style="left:1500.0px;top:1738.5px;width:32px;height:32px;color:#111827;" viewBox="0 0 24 24" stroke-width="2"><path d="M21.3 15.3a2.4 2.4 0 0 1 0 3.4l-2.6 2.6a2.4 2.4 0 0 1-3.4 0L2.7 8.7a2.41 2.41 0 0 1 0-3.4l2.6-2.6a2.41 2.41 0 0 1 3.4 0Z"/><path d="m14.5 12.5 2-2"/><path d="m11.5 9.5 2-2"/><path d="m8.5 6.5 2-2"/><path d="m17.5 15.5 2-2"/></svg>
<div class="a" style="left:1576.0px;top:1730.0px;width:2.0px;height:47.0px;background:#d1d5db;"></div>
<div class="a" style="left:1603.0px;top:1718.6px;width:70.0px;height:70.0px;box-sizing:border-box;border:2px solid #d5d8de;border-radius:10px;"></div>
<svg class="ic" style="left:1621.0px;top:1737.6px;width:32px;height:32px;color:#111827;" viewBox="0 0 24 24" stroke-width="2"><circle cx="11" cy="11" r="8"/><path d="m21 21-4.3-4.3"/></svg>
<div class="a" style="left:658.0px;top:146.0px;width:2.0px;height:1702.0px;background:#d1d5db;"></div>
<div class="a" style="left:2319.0px;top:146.0px;width:2.0px;height:1702.0px;background:#d1d5db;"></div>
<div class="a" style="left:0.0px;top:218.0px;width:3024.0px;height:2.0px;background:#d1d5db;"></div>
<div class="t" style="left:26.0px;top:167.0px;font-size:26px;color:#111827;font-weight:bold;font-family:'Liberation Sans',sans-serif;">Networks</div>
<svg class="ic" style="left:484.0px;top:166.0px;width:28px;height:28px;color:#6b7280;" viewBox="0 0 24 24" stroke-width="2"><circle cx="12" cy="12" r="10"/><path d="M8 12h8"/><path d="M12 8v8"/></svg>
<svg class="ic" style="left:539.7px;top:166.0px;width:28px;height:28px;color:#6b7280;" viewBox="0 0 24 24" stroke-width="2"><circle cx="12" cy="12" r="10"/><path d="M8 12h8"/></svg>
<svg class="ic" style="left:596.0px;top:166.0px;width:28px;height:28px;color:#6b7280;" viewBox="0 0 24 24" stroke-width="2"><path d="M3 12a9 9 0 1 0 9-9 9.75 9.75 0 0 0-6.74 2.74L3 8"/><path d="M3 3v5h5"/></svg>
<div class="a" style="left:8.0px;top:230.0px;width:642.0px;height:56.0px;background:#e1e6f4;border-radius:6px;box-shadow:inset 0 0 0 1px #d6def3;"></div>
<div class="a" style="left:8.0px;top:230.0px;width:4.0px;height:56.0px;background:#5b84f2;border-radius:6px 0 0 6px;"></div>
<svg class="ic" style="left:30.0px;top:244.0px;width:28px;height:28px;color:#6b7280;" viewBox="0 0 24 24" stroke-width="2"><path d="m6 9 6 6 6-6"/></svg>
<div class="t" style="left:77.0px;top:246.4px;font-size:26px;color:#111827;font-weight:bold;font-family:'Liberation Sans',sans-serif;letter-spacing:0.6px;">Three Country Electricity Ma...</div>
<div class="a" style="left:498.0px;top:235.0px;width:140.0px;height:46.0px;background:#5b84f2;border-radius:6px;"></div>
<svg class="ic" style="left:518.8px;top:248.0px;width:20px;height:20px;color:#fff;" viewBox="0 0 24 24" stroke-width="2"><polygon points="6 3 20 12 6 21 6 3"/></svg>
<div class="t" style="left:545.0px;top:247.4px;font-size:21px;color:#fff;font-weight:bold;font-family:'Liberation Sans',sans-serif;">Run (2)</div>
<svg class="ic" style="left:61.4px;top:301.5px;width:28px;height:28px;color:#6b7280;" viewBox="0 0 24 24" stroke-width="2"><path d="m9 18 6-6-6-6"/></svg>
<svg class="ic" style="left:108.0px;top:301.5px;width:28px;height:28px;color:#6b7280;" viewBox="0 0 24 24" stroke-width="2"><path d="M11 21.73a2 2 0 0 0 2 0l7-4A2 2 0 0 0 21 16V8a2 2 0 0 0-1-1.73l-7-4a2 2 0 0 0-2 0l-7 4A2 2 0 0 0 3 8v8a2 2 0 0 0 1 1.73z"/><path d="M12 22V12"/><path d="m3.3 7 7.703 4.734a2 2 0 0 0 1.994 0L20.7 7"/><path d="m7.5 4.27 9 5.15"/></svg>
<div class="t" style="left:149.0px;top:302.8px;font-size:26px;color:#1f2937;font-weight:normal;font-family:'Liberation Sans',sans-serif;-webkit-text-stroke:0.3px currentColor;">Components</div>
<svg class="ic" style="left:61.4px;top:360.0px;width:28px;height:28px;color:#6b7280;" viewBox="0 0 24 24" stroke-width="2"><path d="m6 9 6 6 6-6"/></svg>
<svg class="ic" style="left:108.0px;top:360.0px;width:28px;height:28px;color:#6b7280;" viewBox="0 0 24 24" stroke-width="2"><line x1="6" x2="6" y1="3" y2="15"/><circle cx="18" cy="6" r="3"/><circle cx="6" cy="18" r="3"/><path d="M18 9a9 9 0 0 1-9 9"/></svg>
<div class="t" style="left:149.0px;top:361.0px;font-size:26px;color:#1f2937;font-weight:normal;font-family:'Liberation Sans',sans-serif;-webkit-text-stroke:0.3px currentColor;">Scenarios</div>
<svg class="ic" style="left:610.0px;top:362.0px;width:24px;height:24px;color:#9ca3af;" viewBox="0 0 24 24" stroke-width="2"><circle cx="12" cy="12" r="10"/><path d="M8 12h8"/><path d="M12 8v8"/></svg>
<div class="a" style="left:8.0px;top:404.0px;width:642.0px;height:56.0px;background:#e1e6f4;border-radius:6px;box-shadow:inset 0 0 0 1px #d6def3;"></div>
<div class="a" style="left:8.0px;top:404.0px;width:4.0px;height:56.0px;background:#5b84f2;border-radius:6px 0 0 6px;"></div>
<div class="t" style="left:141.0px;top:418.5px;font-size:26px;color:#111827;font-weight:bold;font-family:'Liberation Sans',sans-serif;letter-spacing:-0.4px;">Base Network</div>
<div class="t" style="left:141.0px;top:476.5px;font-size:26px;color:#1f2937;font-weight:normal;font-family:'Liberation Sans',sans-serif;-webkit-text-stroke:0.3px currentColor;">Coal Capacity Drop</div>
<div class="a" style="left:606.0px;top:416.0px;width:32.0px;height:32.0px;background:#5b84f2;border-radius:7px;"></div>
<svg class="ic" style="left:610.0px;top:420.0px;width:24px;height:24px;color:#fff;" viewBox="0 0 24 24" stroke-width="2.4"><path d="M20 6 9 17l-5-5"/></svg>
<div class="a" style="left:606.0px;top:474.0px;width:32.0px;height:32.0px;background:#5b84f2;border-radius:7px;"></div>
<svg class="ic" style="left:610.0px;top:478.0px;width:24px;height:24px;color:#fff;" viewBox="0 0 24 24" stroke-width="2.4"><path d="M20 6 9 17l-5-5"/></svg>
<svg class="ic" style="left:61.4px;top:534.0px;width:28px;height:28px;color:#6b7280;" viewBox="0 0 24 24" stroke-width="2"><path d="m9 18 6-6-6-6"/></svg>
<svg class="ic" style="left:108.0px;top:534.0px;width:28px;height:28px;color:#6b7280;" viewBox="0 0 24 24" stroke-width="2"><path d="M14.106 5.553a2 2 0 0 0 1.788 0l3.659-1.83A1 1 0 0 1 21 4.619v12.764a1 1 0 0 1-.553.894l-4.553 2.277a2 2 0 0 1-1.788 0l-4.212-2.106a2 2 0 0 0-1.788 0l-3.659 1.83A1 1 0 0 1 3 19.381V6.618a1 1 0 0 1 .553-.894l4.553-2.277a2 2 0 0 1 1.788 0z"/><path d="M15 5.764v15"/><path d="M9 3.236v15"/></svg>
<div class="t" style="left:149.0px;top:534.5px;font-size:26px;color:#1f2937;font-weight:normal;font-family:'Liberation Sans',sans-serif;-webkit-text-stroke:0.3px currentColor;">GeoJSON (0)</div>
<div class="a" style="left:0.0px;top:993.0px;width:658.0px;height:2.0px;background:#d9dce1;"></div>
<div class="t" style="left:26.0px;top:1021.5px;font-size:26px;color:#111827;font-weight:bold;font-family:'Liberation Sans',sans-serif;">Directory</div>
<svg class="ic" style="left:484.0px;top:1020.0px;width:28px;height:28px;color:#6b7280;" viewBox="0 0 24 24" stroke-width="2"><path d="m5 12 7-7 7 7"/><path d="M12 19V5"/></svg>
<svg class="ic" style="left:540.0px;top:1020.0px;width:28px;height:28px;color:#6b7280;" viewBox="0 0 24 24" stroke-width="2"><path d="M20 20a2 2 0 0 0 2-2V8a2 2 0 0 0-2-2h-7.9a2 2 0 0 1-1.69-.9L9.6 3.9A2 2 0 0 0 7.93 3H4a2 2 0 0 0-2 2v13a2 2 0 0 0 2 2Z"/></svg>
<svg class="ic" style="left:596.0px;top:1020.0px;width:28px;height:28px;color:#6b7280;" viewBox="0 0 24 24" stroke-width="2"><path d="M3 12a9 9 0 1 0 9-9 9.75 9.75 0 0 0-6.74 2.74L3 8"/><path d="M3 3v5h5"/></svg>
<div class="a" style="left:0.0px;top:1073.0px;width:658.0px;height:2.0px;background:#d1d5db;"></div>
<svg class="ic" style="left:31.8px;top:1090.0px;width:32px;height:32px;color:#5b84f2;" viewBox="0 0 24 24" stroke-width="2"><path d="M20 20a2 2 0 0 0 2-2V8a2 2 0 0 0-2-2h-7.9a2 2 0 0 1-1.69-.9L9.6 3.9A2 2 0 0 0 7.93 3H4a2 2 0 0 0-2 2v13a2 2 0 0 0 2 2Z"/></svg>
<div class="t" style="left:79.7px;top:1093.3px;font-size:26px;color:#6b7280;font-weight:normal;font-family:'Liberation Sans',sans-serif;letter-spacing:0.6px;-webkit-text-stroke:0.3px currentColor;">demo</div>
<div class="a" style="left:0.0px;top:1137.0px;width:658.0px;height:2.0px;background:#e5e7eb;"></div>
<svg class="ic" style="left:31.8px;top:1154.0px;width:32px;height:32px;color:#5b84f2;" viewBox="0 0 24 24" stroke-width="2"><ellipse cx="12" cy="5" rx="9" ry="3"/><path d="M3 5V19A9 3 0 0 0 21 19V5"/><path d="M3 12A9 3 0 0 0 21 12"/></svg>
<div class="t" style="left:79.7px;top:1157.3px;font-size:26px;color:#111827;font-weight:bold;font-family:'Liberation Sans',sans-serif;letter-spacing:0.4px;">001_three_country_example.db</div>
<div class="t" style="right:2391.0px;top:1159.7px;font-size:22px;color:#6b7280;font-weight:normal;font-family:'Liberation Mono',monospace;">324 KB</div>
<div class="a" style="left:0.0px;top:1201.0px;width:658.0px;height:2.0px;background:#e5e7eb;"></div>
<svg class="ic" style="left:31.8px;top:1218.0px;width:32px;height:32px;color:#5b84f2;" viewBox="0 0 24 24" stroke-width="2"><ellipse cx="12" cy="5" rx="9" ry="3"/><path d="M3 5V19A9 3 0 0 0 21 19V5"/><path d="M3 12A9 3 0 0 0 21 12"/></svg>
<div class="t" style="left:79.7px;top:1221.3px;font-size:26px;color:#1f2937;font-weight:normal;font-family:'Liberation Sans',sans-serif;letter-spacing:0.6px;-webkit-text-stroke:0.3px currentColor;">002_three_bus_lmp_example.db</div>
<div class="t" style="right:2391.0px;top:1223.7px;font-size:22px;color:#6b7280;font-weight:normal;font-family:'Liberation Mono',monospace;">308 KB</div>
<div class="a" style="left:0.0px;top:1265.0px;width:658.0px;height:2.0px;background:#e5e7eb;"></div>
<svg class="ic" style="left:31.8px;top:1282.0px;width:32px;height:32px;color:#5b84f2;" viewBox="0 0 24 24" stroke-width="2"><ellipse cx="12" cy="5" rx="9" ry="3"/><path d="M3 5V19A9 3 0 0 0 21 19V5"/><path d="M3 12A9 3 0 0 0 21 12"/></svg>
<div class="t" style="left:79.7px;top:1285.3px;font-size:26px;color:#1f2937;font-weight:normal;font-family:'Liberation Sans',sans-serif;letter-spacing:0.6px;-webkit-text-stroke:0.3px currentColor;">003_ghana_togo_expansion.db</div>
<div class="t" style="right:2391.0px;top:1287.7px;font-size:22px;color:#6b7280;font-weight:normal;font-family:'Liberation Mono',monospace;">2.78 MB</div>
<div class="a" style="left:0.0px;top:1329.0px;width:658.0px;height:2.0px;background:#e5e7eb;"></div>
<svg class="ic" style="left:31.8px;top:1346.0px;width:32px;height:32px;color:#5b84f2;" viewBox="0 0 24 24" stroke-width="2"><ellipse cx="12" cy="5" rx="9" ry="3"/><path d="M3 5V19A9 3 0 0 0 21 19V5"/><path d="M3 12A9 3 0 0 0 21 12"/></svg>
<div class="t" style="left:79.7px;top:1349.3px;font-size:26px;color:#1f2937;font-weight:normal;font-family:'Liberation Sans',sans-serif;letter-spacing:0.6px;-webkit-text-stroke:0.3px currentColor;">004_forecast_truth.db</div>
<div class="t" style="right:2391.0px;top:1351.7px;font-size:22px;color:#6b7280;font-weight:normal;font-family:'Liberation Mono',monospace;">376 KB</div>
<div class="a" style="left:0.0px;top:1393.0px;width:658.0px;height:2.0px;background:#e5e7eb;"></div>
<svg class="ic" style="left:31.8px;top:1410.0px;width:32px;height:32px;color:#5b84f2;" viewBox="0 0 24 24" stroke-width="2"><ellipse cx="12" cy="5" rx="9" ry="3"/><path d="M3 5V19A9 3 0 0 0 21 19V5"/><path d="M3 12A9 3 0 0 0 21 12"/></svg>
<div class="t" style="left:79.7px;top:1413.3px;font-size:26px;color:#1f2937;font-weight:normal;font-family:'Liberation Sans',sans-serif;letter-spacing:0.6px;-webkit-text-stroke:0.3px currentColor;">blah.db</div>
<div class="t" style="right:2391.0px;top:1415.7px;font-size:22px;color:#6b7280;font-weight:normal;font-family:'Liberation Mono',monospace;">1.59 MB</div>
<div class="a" style="left:0.0px;top:1457.0px;width:658.0px;height:2.0px;background:#e5e7eb;"></div>
<svg class="ic" style="left:31.8px;top:1474.0px;width:32px;height:32px;color:#5b84f2;" viewBox="0 0 24 24" stroke-width="2"><ellipse cx="12" cy="5" rx="9" ry="3"/><path d="M3 5V19A9 3 0 0 0 21 19V5"/><path d="M3 12A9 3 0 0 0 21 12"/></svg>
<div class="t" style="left:79.7px;top:1477.3px;font-size:26px;color:#1f2937;font-weight:normal;font-family:'Liberation Sans',sans-serif;letter-spacing:0.6px;-webkit-text-stroke:0.3px currentColor;">elec_s_1024_modified.db</div>
<div class="t" style="right:2391.0px;top:1479.7px;font-size:22px;color:#6b7280;font-weight:normal;font-family:'Liberation Mono',monospace;">30.89 MB</div>
<div class="a" style="left:0.0px;top:1521.0px;width:658.0px;height:2.0px;background:#e5e7eb;"></div>
<svg class="ic" style="left:31.8px;top:1538.0px;width:32px;height:32px;color:#5b84f2;" viewBox="0 0 24 24" stroke-width="2"><ellipse cx="12" cy="5" rx="9" ry="3"/><path d="M3 5V19A9 3 0 0 0 21 19V5"/><path d="M3 12A9 3 0 0 0 21 12"/></svg>
<div class="t" style="left:79.7px;top:1541.3px;font-size:26px;color:#1f2937;font-weight:normal;font-family:'Liberation Sans',sans-serif;letter-spacing:0.6px;-webkit-text-stroke:0.3px currentColor;">elec.db</div>
<div class="t" style="right:2391.0px;top:1543.7px;font-size:22px;color:#6b7280;font-weight:normal;font-family:'Liberation Mono',monospace;">375.72 MB</div>
<div class="a" style="left:0.0px;top:1585.0px;width:658.0px;height:2.0px;background:#e5e7eb;"></div>
<svg class="ic" style="left:31.8px;top:1602.0px;width:32px;height:32px;color:#5b84f2;" viewBox="0 0 24 24" stroke-width="2"><ellipse cx="12" cy="5" rx="9" ry="3"/><path d="M3 5V19A9 3 0 0 0 21 19V5"/><path d="M3 12A9 3 0 0 0 21 12"/></svg>
<div class="t" style="left:79.7px;top:1605.3px;font-size:26px;color:#1f2937;font-weight:normal;font-family:'Liberation Sans',sans-serif;letter-spacing:0.6px;-webkit-text-stroke:0.3px currentColor;">nc_export.db</div>
<div class="t" style="right:2391.0px;top:1607.7px;font-size:22px;color:#6b7280;font-weight:normal;font-family:'Liberation Mono',monospace;">12.07 MB</div>
<div class="a" style="left:0.0px;top:1649.0px;width:658.0px;height:2.0px;background:#e5e7eb;"></div>
<svg class="ic" style="left:31.8px;top:1666.0px;width:32px;height:32px;color:#5b84f2;" viewBox="0 0 24 24" stroke-width="2"><ellipse cx="12" cy="5" rx="9" ry="3"/><path d="M3 5V19A9 3 0 0 0 21 19V5"/><path d="M3 12A9 3 0 0 0 21 12"/></svg>
<div class="t" style="left:79.7px;top:1669.3px;font-size:26px;color:#1f2937;font-weight:normal;font-family:'Liberation Sans',sans-serif;letter-spacing:0.6px;-webkit-text-stroke:0.3px currentColor;">pypsa_gb_zonal_2025_jan.db</div>
<div class="t" style="right:2391.0px;top:1671.7px;font-size:22px;color:#6b7280;font-weight:normal;font-family:'Liberation Mono',monospace;">19.31 MB</div>
<div class="a" style="left:0.0px;top:1713.0px;width:658.0px;height:2.0px;background:#e5e7eb;"></div>
<svg class="ic" style="left:32.8px;top:1731.0px;width:30px;height:30px;color:#9ca3af;" viewBox="0 0 24 24" stroke-width="2"><path d="M12.22 2h-.44a2 2 0 0 0-2 2v.18a2 2 0 0 1-1 1.73l-.43.25a2 2 0 0 1-2 0l-.15-.08a2 2 0 0 0-2.73.73l-.22.38a2 2 0 0 0 .73 2.73l.15.1a2 2 0 0 1 1 1.72v.51a2 2 0 0 1-1 1.74l-.15.09a2 2 0 0 0-.73 2.73l.22.38a2 2 0 0 0 2.73.73l.15-.08a2 2 0 0 1 2 0l.43.25a2 2 0 0 1 1 1.73V20a2 2 0 0 0 2 2h.44a2 2 0 0 0 2-2v-.18a2 2 0 0 1 1-1.73l.43-.25a2 2 0 0 1 2 0l.15.08a2 2 0 0 0 2.73-.73l.22-.39a2 2 0 0 0-.73-2.73l-.15-.08a2 2 0 0 1-1-1.74v-.5a2 2 0 0 1 1-1.74l.15-.09a2 2 0 0 0 .73-2.73l-.22-.38a2 2 0 0 0-2.73-.73l-.15.08a2 2 0 0 1-2 0l-.43-.25a2 2 0 0 1-1-1.73V4a2 2 0 0 0-2-2z"/><circle cx="12" cy="12" r="3"/></svg>
<div class="t" style="left:79.7px;top:1733.3px;font-size:26px;color:#9ca3af;font-weight:normal;font-family:'Liberation Sans',sans-serif;letter-spacing:0.6px;-webkit-text-stroke:0.3px currentColor;">zones_json.geojson</div>
<div class="t" style="right:2391.0px;top:1735.7px;font-size:22px;color:#9ca3af;font-weight:normal;font-family:'Liberation Mono',monospace;">265.13 KB</div>
<div class="a" style="left:0.0px;top:1777.0px;width:658.0px;height:2.0px;background:#e5e7eb;"></div>
<svg class="ic" style="left:24.5px;top:1794.0px;width:32px;height:32px;color:#5b84f2;" viewBox="0 0 24 24" stroke-width="2"><path d="M20 20a2 2 0 0 0 2-2V8a2 2 0 0 0-2-2h-7.9a2 2 0 0 1-1.69-.9L9.6 3.9A2 2 0 0 0 7.93 3H4a2 2 0 0 0-2 2v13a2 2 0 0 0 2 2Z"/></svg>
<div class="a" style="left:0;top:1778px;width:658px;height:64px;overflow:hidden;"><div class="t" style="left:74.30000000000001px;top:19.9px;font-size:26px;color:#6b7280;font-family:'Liberation Mono',monospace;">/Users/aman/Downloads/convexity-networks</div></div>
<div class="a" style="left:0.0px;top:1841.0px;width:519.0px;height:6.0px;background:#d1d5db;border-radius:3px;"></div>
<div class="a" style="left:668.0px;top:152.0px;width:150.0px;height:56.0px;background:#e4e6ea;border-radius:12px;box-shadow:0 1px 2px rgba(0,0,0,0.04);"></div>
<svg class="ic" style="left:695.0px;top:165.0px;width:30px;height:30px;color:#5b84f2;" viewBox="0 0 24 24" stroke-width="2"><path d="M20 10c0 4.993-5.539 10.193-7.399 11.799a1 1 0 0 1-1.202 0C9.539 20.193 4 14.993 4 10a8 8 0 0 1 16 0"/><circle cx="12" cy="10" r="3"/></svg>
<div class="t" style="left:737.0px;top:166.8px;font-size:26px;color:#111827;font-weight:bold;font-family:'Liberation Sans',sans-serif;">Map</div>
<svg class="ic" style="left:846.0px;top:166.0px;width:28px;height:28px;color:#4b5563;" viewBox="0 0 24 24" stroke-width="2"><path d="M3 12h.01"/><path d="M3 18h.01"/><path d="M3 6h.01"/><path d="M8 12h13"/><path d="M8 18h13"/><path d="M8 6h13"/></svg>
<div class="t" style="left:886.5px;top:166.8px;font-size:26px;color:#4b5563;font-weight:bold;font-family:'Liberation Sans',sans-serif;">Table</div>
<svg class="ic" style="left:1007.0px;top:166.0px;width:28px;height:28px;color:#4b5563;" viewBox="0 0 24 24" stroke-width="2"><path d="M3 3v16a2 2 0 0 0 2 2h16"/><path d="M18 17V9"/><path d="M13 17V5"/><path d="M8 17v-3"/></svg>
<div class="t" style="left:1049.0px;top:166.8px;font-size:26px;color:#4b5563;font-weight:bold;font-family:'Liberation Sans',sans-serif;">Analytics</div>
<svg class="ic" style="left:1217.5px;top:166.0px;width:28px;height:28px;color:#4b5563;" viewBox="0 0 24 24" stroke-width="2"><ellipse cx="12" cy="5" rx="9" ry="3"/><path d="M3 5V19A9 3 0 0 0 21 19V5"/><path d="M3 12A9 3 0 0 0 21 12"/></svg>
<div class="t" style="left:1258.0px;top:166.8px;font-size:26px;color:#4b5563;font-weight:bold;font-family:'Liberation Sans',sans-serif;">Data Explorer</div>
<svg class="ic" style="left:1481.0px;top:166.0px;width:28px;height:28px;color:#9ca3af;" viewBox="0 0 24 24" stroke-width="2"><path d="m18 16 4-4-4-4"/><path d="m6 8-4 4 4 4"/><path d="m14.5 4-5 16"/></svg>
<div class="t" style="left:1522.0px;top:166.8px;font-size:26px;color:#9ca3af;font-weight:bold;font-family:'Liberation Sans',sans-serif;">Code</div>
<svg class="ic" style="left:1643.6px;top:166.0px;width:28px;height:28px;color:#9ca3af;" viewBox="0 0 24 24" stroke-width="2"><path d="M13.4 2H6a2 2 0 0 0-2 2v16a2 2 0 0 0 2 2h12a2 2 0 0 0 2-2v-7.4"/><path d="M2 6h4"/><path d="M2 10h4"/><path d="M2 14h4"/><path d="M2 18h4"/><path d="M21.378 5.626a1 1 0 1 0-3.004-3.004l-5.01 5.012a2 2 0 0 0-.506.854l-.837 2.87a.5.5 0 0 0 .62.62l2.87-.837a2 2 0 0 0 .854-.506z"/></svg>
<div class="t" style="left:1683.0px;top:166.8px;font-size:26px;color:#9ca3af;font-weight:bold;font-family:'Liberation Sans',sans-serif;">Notebook</div>
<div class="a" style="left:2329.0px;top:152.0px;width:168.0px;height:56.0px;background:#e4e6ea;border-radius:12px;"></div>
<svg class="ic" style="left:2356.8px;top:165.0px;width:30px;height:30px;color:#5b84f2;" viewBox="0 0 24 24" stroke-width="2"><path d="M21 8a2 2 0 0 0-1-1.73l-7-4a2 2 0 0 0-2 0l-7 4A2 2 0 0 0 3 8v8a2 2 0 0 0 1 1.73l7 4a2 2 0 0 0 2 0l7-4A2 2 0 0 0 21 16Z"/><path d="m3.3 7 8.7 5 8.7-5"/><path d="M12 22V12"/></svg>
<div class="t" style="left:2398.0px;top:166.8px;font-size:26px;color:#111827;font-weight:bold;font-family:'Liberation Sans',sans-serif;">Asset</div>
<svg class="ic" style="left:2524.0px;top:166.0px;width:28px;height:28px;color:#9ca3af;" viewBox="0 0 24 24" stroke-width="2"><path d="M21 15a2 2 0 0 1-2 2H7l-4 4V5a2 2 0 0 1 2-2h14a2 2 0 0 1 2 2z"/></svg>
<div class="t" style="left:2565.0px;top:166.8px;font-size:26px;color:#9ca3af;font-weight:bold;font-family:'Liberation Sans',sans-serif;">Chat</div>
<svg class="ic" style="left:2624.0px;top:886.0px;width:96px;height:96px;color:#9ca3af;" viewBox="0 0 24 24" stroke-width="2"><circle cx="12" cy="12" r="10"/><line x1="12" x2="12" y1="8" y2="12"/><line x1="12" x2="12.01" y1="16" y2="16"/></svg>
<div class="t" style="left:1672.0px;width:2000px;text-align:center;top:1026.2px;font-size:39.5px;color:#6b7280;font-weight:bold;font-family:'Liberation Sans',sans-serif;letter-spacing:-0.9px;">No asset selected</div>
<div class="t" style="left:1672.0px;width:2000px;text-align:center;top:1115.5px;font-size:26px;color:#6b7280;font-weight:normal;font-family:'Liberation Sans',sans-serif;letter-spacing:0.56px;">Select an asset on the map to view and edit its</div>
<div class="t" style="left:1672.0px;width:2000px;text-align:center;top:1150.8px;font-size:26px;color:#6b7280;font-weight:normal;font-family:'Liberation Sans',sans-serif;letter-spacing:0.7px;">details</div>
<div class="a" style="left:0.0px;top:1848.0px;width:3024.0px;height:47.0px;background:#f5f6f8;"></div>
<div class="a" style="left:0.0px;top:1847.0px;width:3024.0px;height:2.0px;background:#d9dce1;"></div>
<div class="a" style="left:31.0px;top:1864.5px;width:17.0px;height:17.0px;border-radius:50%;background:#e9a84c;"></div>
<div class="t" style="left:61.0px;top:1860.9px;font-size:25.5px;color:#1f2937;font-weight:normal;font-family:'Liberation Sans',sans-serif;letter-spacing:-0.4px;">Running</div>
<svg class="ic" style="left:2950px;top:1854px;width:40px;height:40px;color:#4b5563;" viewBox="3062 1930 40 40" stroke-width="2.6"><circle cx="3082" cy="1942.3" r="4.6"/><path d="M3074.7 1957.6v-2.2a4.2 4.2 0 0 1 4.2-4.2h6.4a4.2 4.2 0 0 1 4.2 4.2v2.2"/></svg>
</div>
<div id="redbox"></div>
</body></html>
